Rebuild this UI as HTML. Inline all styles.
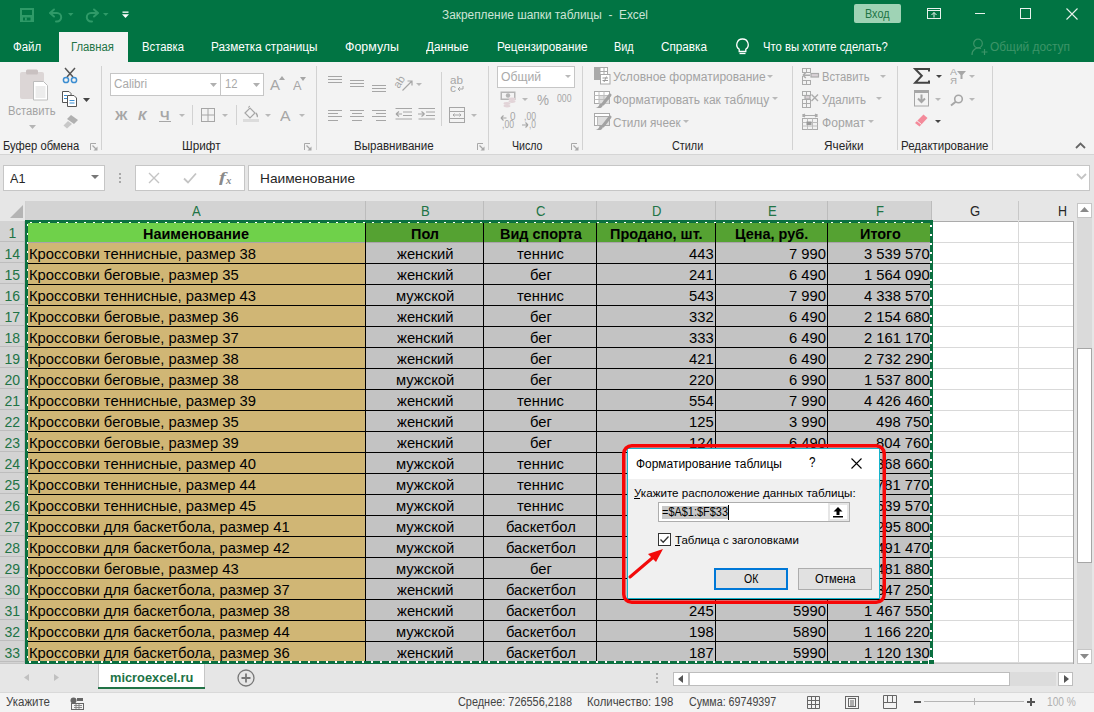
<!DOCTYPE html>
<html><head><meta charset="utf-8"><style>
*{margin:0;padding:0;box-sizing:border-box}
html,body{width:1094px;height:712px;overflow:hidden;background:#e6e6e6;font-family:"Liberation Sans",sans-serif}
body{position:relative}
.t{position:absolute;white-space:nowrap;transform-origin:0 0}
.r{position:absolute}
.s{position:absolute;overflow:visible}
</style></head><body>
<div class="r" style="left:0px;top:0px;width:1094px;height:62px;background:#017443;"></div><svg class="s" style="left:20px;top:8px;" width="14" height="14" viewBox="0 0 14 14"><path d="M0 0H14V14H0Z M2 2V7H12V2Z M3 9.5V12.5H10.5V9.5Z" fill="#2f9a68" fill-rule="evenodd"/><rect x="5" y="9.5" width="1.8" height="3" fill="#2f9a68"/></svg><svg class="s" style="left:48px;top:8px;" width="16" height="14" viewBox="0 0 16 14"><path d="M6 1.5L2 5L6 8.5" fill="none" stroke="#2f9a68" stroke-width="2" stroke-linecap="round" stroke-linejoin="round"/><path d="M2.5 5H9A4.2 4.2 0 0 1 9 13.4H8" fill="none" stroke="#2f9a68" stroke-width="2" stroke-linecap="round"/></svg><svg class="s" style="left:67.75px;top:12.9px;" width="5.5" height="3" viewBox="0 0 5.5 3"><path d="M0 0H5.5L2.75 3Z" fill="#2f9a68"/></svg><svg class="s" style="left:84px;top:8px;" width="16" height="14" viewBox="0 0 16 14"><path d="M10 1.5L14 5L10 8.5" fill="none" stroke="#2f9a68" stroke-width="2" stroke-linecap="round" stroke-linejoin="round"/><path d="M13.5 5H7A4.2 4.2 0 0 0 7 13.4H8" fill="none" stroke="#2f9a68" stroke-width="2" stroke-linecap="round"/></svg><svg class="s" style="left:102.75px;top:12.9px;" width="5.5" height="3" viewBox="0 0 5.5 3"><path d="M0 0H5.5L2.75 3Z" fill="#2f9a68"/></svg><svg class="s" style="left:122px;top:11px;" width="7" height="8" viewBox="0 0 7 8"><rect x="0.5" y="0.5" width="6" height="1.3" fill="#fff"/><path d="M0 3.3H7L3.5 7Z" fill="#fff"/></svg><div class="t" style="left:441.70px;top:8.14px;font-size:12px;line-height:14px;color:#cde5d6;transform:scaleX(0.9886);">Закрепление шапки таблицы&nbsp;&nbsp;-&nbsp;&nbsp;Excel</div><div class="r" style="left:854px;top:4px;width:47px;height:19px;background:#9fd3b5;border-radius:2px"></div><div class="t" style="left:865.25px;top:7.14px;font-size:12px;line-height:14px;color:#217346;transform:scaleX(0.9025);">Вход</div><svg class="s" style="left:927px;top:8px;" width="14" height="11" viewBox="0 0 14 11"><rect x="0.5" y="0.5" width="13" height="10" fill="none" stroke="#e8f1ec"/><path d="M1 2.5H13" stroke="#e8f1ec"/><path d="M7 9.5V4.5M4.5 7L7 4.5L9.5 7" fill="none" stroke="#e8f1ec"/></svg><div class="r" style="left:975px;top:13px;width:10px;height:1px;background:#e8f1ec;"></div><svg class="s" style="left:1020px;top:8px;" width="11" height="11" viewBox="0 0 11 11"><rect x="0.5" y="0.5" width="10" height="10" fill="none" stroke="#e8f1ec"/></svg><svg class="s" style="left:1066px;top:8px;" width="12" height="12" viewBox="0 0 12 12"><path d="M0.5 0.5L11.5 11.5M11.5 0.5L0.5 11.5" stroke="#e8f1ec" stroke-width="1.1"/></svg><div class="r" style="left:59px;top:32px;width:69px;height:30px;background:#f3f3f3;"></div><div class="t" style="left:13.40px;top:39.64px;font-size:12px;line-height:14px;color:#ffffff;transform:scaleX(0.9559);">Файл</div><div class="t" style="left:71.40px;top:39.64px;font-size:12px;line-height:14px;color:#217346;transform:scaleX(0.9393);">Главная</div><div class="t" style="left:142.00px;top:39.64px;font-size:12px;line-height:14px;color:#ffffff;transform:scaleX(0.9417);">Вставка</div><div class="t" style="left:211.00px;top:39.64px;font-size:12px;line-height:14px;color:#ffffff;transform:scaleX(0.9783);">Разметка страницы</div><div class="t" style="left:345.00px;top:39.64px;font-size:12px;line-height:14px;color:#ffffff;transform:scaleX(1.0341);">Формулы</div><div class="t" style="left:426.00px;top:39.64px;font-size:12px;line-height:14px;color:#ffffff;transform:scaleX(0.9826);">Данные</div><div class="t" style="left:496.50px;top:39.64px;font-size:12px;line-height:14px;color:#ffffff;transform:scaleX(0.9767);">Рецензирование</div><div class="t" style="left:614.00px;top:39.64px;font-size:12px;line-height:14px;color:#ffffff;transform:scaleX(0.9075);">Вид</div><div class="t" style="left:661.00px;top:39.64px;font-size:12px;line-height:14px;color:#ffffff;transform:scaleX(0.9772);">Справка</div><svg class="s" style="left:735px;top:38px;" width="15" height="18" viewBox="0 0 15 18"><path d="M7.5 1A5.6 5.6 0 0 0 4.2 11.2V13.5H10.8V11.2A5.6 5.6 0 0 0 7.5 1Z" fill="none" stroke="#fff" stroke-width="1.3"/><path d="M4.5 15.5H10.5" stroke="#fff" stroke-width="1.3"/></svg><div class="t" style="left:762.70px;top:39.64px;font-size:12px;line-height:14px;color:#ffffff;transform:scaleX(0.9408);">Что вы хотите сделать?</div><svg class="s" style="left:971px;top:38px;" width="17" height="18" viewBox="0 0 17 18"><circle cx="7" cy="5.5" r="4.3" fill="none" stroke="#3d9468" stroke-width="1.2"/><path d="M1 17A6.5 6.5 0 0 1 10 10.5" fill="none" stroke="#3d9468" stroke-width="1.2"/><path d="M10.5 14H16.5M13.5 11V17" stroke="#3d9468" stroke-width="1.2"/></svg><div class="t" style="left:990.00px;top:39.64px;font-size:12px;line-height:14px;color:#3d9468;transform:scaleX(0.9922);">Общий доступ</div>
<div class="r" style="left:0px;top:62px;width:1094px;height:92px;background:#f3f3f3;"></div><div class="r" style="left:0px;top:154px;width:1094px;height:1px;background:#d5d5d5;"></div><div class="r" style="left:101px;top:66px;width:1px;height:84px;background:#d2d2d2;"></div><div class="r" style="left:316px;top:66px;width:1px;height:84px;background:#d2d2d2;"></div><div class="r" style="left:488px;top:66px;width:1px;height:84px;background:#d2d2d2;"></div><div class="r" style="left:582px;top:66px;width:1px;height:84px;background:#d2d2d2;"></div><div class="r" style="left:792px;top:66px;width:1px;height:84px;background:#d2d2d2;"></div><div class="r" style="left:897px;top:66px;width:1px;height:84px;background:#d2d2d2;"></div><div class="r" style="left:992px;top:66px;width:1px;height:84px;background:#d2d2d2;"></div><div class="t" style="left:3.30px;top:138.84px;font-size:12px;line-height:14px;color:#262626;transform:scaleX(0.9345);">Буфер обмена</div><div class="t" style="left:181.50px;top:138.84px;font-size:12px;line-height:14px;color:#262626;transform:scaleX(0.9752);">Шрифт</div><div class="t" style="left:354.00px;top:138.84px;font-size:12px;line-height:14px;color:#262626;transform:scaleX(0.9637);">Выравнивание</div><div class="t" style="left:511.50px;top:138.84px;font-size:12px;line-height:14px;color:#262626;transform:scaleX(0.8838);">Число</div><div class="t" style="left:671.50px;top:138.84px;font-size:12px;line-height:14px;color:#262626;transform:scaleX(0.9025);">Стили</div><div class="t" style="left:824.00px;top:138.84px;font-size:12px;line-height:14px;color:#262626;transform:scaleX(0.9814);">Ячейки</div><div class="t" style="left:901.00px;top:138.84px;font-size:12px;line-height:14px;color:#262626;transform:scaleX(0.9572);">Редактирование</div><svg class="s" style="left:90px;top:143px;" width="8" height="8" viewBox="0 0 8 8"><path d="M0.5 7V0.5H6" fill="none" stroke="#a8a8a8"/><path d="M2.5 2.5L6 6" stroke="#a8a8a8" stroke-width="1.2"/><path d="M7.5 3.5V7.5H3.5Z" fill="#a8a8a8"/></svg><svg class="s" style="left:304px;top:143px;" width="8" height="8" viewBox="0 0 8 8"><path d="M0.5 7V0.5H6" fill="none" stroke="#a8a8a8"/><path d="M2.5 2.5L6 6" stroke="#a8a8a8" stroke-width="1.2"/><path d="M7.5 3.5V7.5H3.5Z" fill="#a8a8a8"/></svg><svg class="s" style="left:477px;top:143px;" width="8" height="8" viewBox="0 0 8 8"><path d="M0.5 7V0.5H6" fill="none" stroke="#a8a8a8"/><path d="M2.5 2.5L6 6" stroke="#a8a8a8" stroke-width="1.2"/><path d="M7.5 3.5V7.5H3.5Z" fill="#a8a8a8"/></svg><svg class="s" style="left:571px;top:143px;" width="8" height="8" viewBox="0 0 8 8"><path d="M0.5 7V0.5H6" fill="none" stroke="#a8a8a8"/><path d="M2.5 2.5L6 6" stroke="#a8a8a8" stroke-width="1.2"/><path d="M7.5 3.5V7.5H3.5Z" fill="#a8a8a8"/></svg><svg class="s" style="left:19px;top:69px;" width="30" height="32" viewBox="0 0 30 32"><rect x="1" y="3" width="24" height="27" rx="2" fill="#dcd6d6"/><rect x="7" y="0.5" width="12" height="5" rx="1.5" fill="#c9c1c1"/><path d="M14.5 12.5H24.5L28.5 16.5V31H14.5Z" fill="#fff" stroke="#bdbdbd"/><path d="M16.5 17H26.5V29H16.5Z" fill="#ececec"/></svg><div class="t" style="left:8.20px;top:103.64px;font-size:12px;line-height:14px;color:#a3a3a3;transform:scaleX(0.9358);">Вставить</div><svg class="s" style="left:29.0px;top:124.5px;" width="7" height="4" viewBox="0 0 7 4"><path d="M0 0H7L3.5 4Z" fill="#b5b5b5"/></svg><svg class="s" style="left:62px;top:67px;" width="16" height="17" viewBox="0 0 16 17"><path d="M3 1L11 10M13 1L5 10" stroke="#555" stroke-width="1.5"/><circle cx="4" cy="13" r="2.6" fill="none" stroke="#3b8dd1" stroke-width="1.5"/><circle cx="12" cy="13" r="2.6" fill="none" stroke="#3b8dd1" stroke-width="1.5"/></svg><svg class="s" style="left:62px;top:91px;" width="16" height="16" viewBox="0 0 16 16"><path d="M0.5 0.5H7L9 2.5V11.5H0.5Z" fill="#fff" stroke="#555"/><path d="M5.5 4.5H12L14.5 7V15.5H5.5Z" fill="#fff" stroke="#555"/><rect x="2" y="4" width="3" height="1" fill="#3b8dd1"/><rect x="2" y="7" width="3" height="1" fill="#3b8dd1"/><rect x="7.5" y="9" width="5" height="1" fill="#3b8dd1"/><rect x="7.5" y="11.5" width="5" height="1" fill="#3b8dd1"/></svg><svg class="s" style="left:83.0px;top:97.5px;" width="7" height="4" viewBox="0 0 7 4"><path d="M0 0H7L3.5 4Z" fill="#444"/></svg><svg class="s" style="left:62px;top:114px;" width="17" height="15" viewBox="0 0 17 15"><path d="M9 1L16 6L12 10L5 5Z" fill="#b0b0b0"/><path d="M6 7L10 10L5 14.5L1.5 11.5Z" fill="#c8c8c8"/></svg><div class="r" style="left:110px;top:73px;width:154px;height:23px;background:#fff;border:1px solid #c6c6c6"></div><div class="r" style="left:220px;top:73px;width:1px;height:23px;background:#c6c6c6;"></div><div class="t" style="left:113.70px;top:77.47px;font-size:12.5px;line-height:14px;color:#a9a9a9;transform:scaleX(0.9315);">Calibri</div><svg class="s" style="left:210.2px;top:82.5px;" width="7" height="4" viewBox="0 0 7 4"><path d="M0 0H7L3.5 4Z" fill="#b0b0b0"/></svg><div class="t" style="left:224.70px;top:77.47px;font-size:12.5px;line-height:14px;color:#a9a9a9;transform:scaleX(0.8990);">12</div><svg class="s" style="left:253.0px;top:82.5px;" width="7" height="4" viewBox="0 0 7 4"><path d="M0 0H7L3.5 4Z" fill="#b0b0b0"/></svg><div class="t" style="left:270.00px;top:76.30px;font-size:15px;line-height:17px;color:#a6a6a6;">A</div><svg class="s" style="left:279px;top:76px;" width="6" height="4" viewBox="0 0 6 4"><path d="M0 4L3 0L6 4Z" fill="#a6a6a6"/></svg><div class="t" style="left:293.00px;top:78.84px;font-size:12px;line-height:14px;color:#a6a6a6;transform:scaleX(1.0620);">A</div><svg class="s" style="left:300px;top:77px;" width="6" height="4" viewBox="0 0 6 4"><path d="M0 0H6L3 4Z" fill="#a6a6a6"/></svg><div class="t" style="left:114.50px;top:108.00px;font-size:13px;line-height:15px;color:#a6a6a6;font-weight:bold;transform:scaleX(1.0639);">Ж</div><div class="t" style="left:138.00px;top:108.00px;font-size:13px;line-height:15px;color:#a6a6a6;font-weight:bold;transform:scaleX(1.0712);font-style:italic;">К</div><div class="t" style="left:160.00px;top:108.00px;font-size:13px;line-height:15px;color:#a6a6a6;font-weight:bold;transform:scaleX(1.0400);">Ч</div><div class="r" style="left:159px;top:121px;width:12px;height:1px;background:#a6a6a6;"></div><svg class="s" style="left:178.5px;top:114.0px;" width="6" height="3" viewBox="0 0 6 3"><path d="M0 0H6L3.0 3Z" fill="#b9b9b9"/></svg><div class="r" style="left:192px;top:105px;width:1px;height:20px;background:#d2d2d2;"></div><svg class="s" style="left:201px;top:108px;" width="14" height="14" viewBox="0 0 14 14"><rect x="0.5" y="0.5" width="13" height="13" fill="none" stroke="#a6a6a6"/><path d="M7 0.5V13.5M0.5 7H13.5" stroke="#a6a6a6"/></svg><svg class="s" style="left:221.5px;top:114.0px;" width="6" height="3" viewBox="0 0 6 3"><path d="M0 0H6L3.0 3Z" fill="#b9b9b9"/></svg><div class="r" style="left:236px;top:105px;width:1px;height:20px;background:#d2d2d2;"></div><svg class="s" style="left:243px;top:106px;" width="17" height="16" viewBox="0 0 17 16"><path d="M2 7L7 2L12 7L7 12Z" fill="none" stroke="#a6a6a6" stroke-width="1.2"/><path d="M5 1.5L7 0" stroke="#a6a6a6"/><path d="M13 7Q15 10 14 11" fill="none" stroke="#a6a6a6" stroke-width="1.5"/><rect x="0" y="13" width="16" height="3" fill="#dcdcdc"/></svg><svg class="s" style="left:264.5px;top:114.0px;" width="6" height="3" viewBox="0 0 6 3"><path d="M0 0H6L3.0 3Z" fill="#b9b9b9"/></svg><div class="t" style="left:280.00px;top:107.30px;font-size:15px;line-height:17px;color:#a6a6a6;transform:scaleX(1.0495);">A</div><svg class="s" style="left:298.5px;top:114.0px;" width="6" height="3" viewBox="0 0 6 3"><path d="M0 0H6L3.0 3Z" fill="#b9b9b9"/></svg><svg class="s" style="left:328px;top:76px;" width="16" height="10" viewBox="0 0 16 10"><rect x="0" y="0" width="14" height="1" fill="#a6a6a6"/><rect x="0" y="3" width="14" height="1" fill="#a6a6a6"/><rect x="0" y="6" width="14" height="1" fill="#a6a6a6"/></svg><svg class="s" style="left:350px;top:80px;" width="16" height="10" viewBox="0 0 16 10"><rect x="0" y="0" width="14" height="1" fill="#a6a6a6"/><rect x="0" y="3" width="14" height="1" fill="#a6a6a6"/><rect x="0" y="6" width="14" height="1" fill="#a6a6a6"/></svg><svg class="s" style="left:372px;top:85px;" width="16" height="10" viewBox="0 0 16 10"><rect x="0" y="0" width="14" height="1" fill="#a6a6a6"/><rect x="0" y="3" width="14" height="1" fill="#a6a6a6"/><rect x="0" y="6" width="14" height="1" fill="#a6a6a6"/></svg><svg class="s" style="left:394px;top:75px;" width="20" height="18" viewBox="0 0 20 18"><text x="0" y="0" font-size="11" font-family="Liberation Sans" fill="#a6a6a6" transform="translate(5 14) rotate(-58)">ab</text><path d="M8.5 15.5L17.5 6.5M13.5 6H18V10.5" fill="none" stroke="#a6a6a6" stroke-width="1.2"/></svg><svg class="s" style="left:415.5px;top:83.0px;" width="6" height="3" viewBox="0 0 6 3"><path d="M0 0H6L3.0 3Z" fill="#b9b9b9"/></svg><svg class="s" style="left:328px;top:110px;" width="16" height="11" viewBox="0 0 16 11"><rect x="0" y="0" width="14" height="1" fill="#a6a6a6"/><rect x="0" y="3" width="10" height="1" fill="#a6a6a6"/><rect x="0" y="6" width="14" height="1" fill="#a6a6a6"/><rect x="0" y="10" width="10" height="1" fill="#a6a6a6"/></svg><svg class="s" style="left:350px;top:110px;" width="16" height="11" viewBox="0 0 16 11"><rect x="0" y="0" width="14" height="1" fill="#a6a6a6"/><rect x="2" y="3" width="10" height="1" fill="#a6a6a6"/><rect x="0" y="6" width="14" height="1" fill="#a6a6a6"/><rect x="2" y="10" width="10" height="1" fill="#a6a6a6"/></svg><svg class="s" style="left:372px;top:110px;" width="16" height="11" viewBox="0 0 16 11"><rect x="0" y="0" width="14" height="1" fill="#a6a6a6"/><rect x="4" y="3" width="10" height="1" fill="#a6a6a6"/><rect x="0" y="6" width="14" height="1" fill="#a6a6a6"/><rect x="4" y="10" width="10" height="1" fill="#a6a6a6"/></svg><svg class="s" style="left:395px;top:108px;" width="18" height="13" viewBox="0 0 18 13"><path d="M0.5 0.5H17M8 4H17M8 7.5H17M0.5 11H17" stroke="#a6a6a6"/><path d="M1 6H7M1 6L4 3.5M1 6L4 8.5" fill="none" stroke="#a6a6a6" stroke-width="1.2"/></svg><svg class="s" style="left:418px;top:108px;" width="18" height="13" viewBox="0 0 18 13"><path d="M0.5 0.5H17M8 4H17M8 7.5H17M0.5 11H17" stroke="#a6a6a6"/><path d="M0 6H6.5M6.5 6L3.5 3.5M6.5 6L3.5 8.5" fill="none" stroke="#a6a6a6" stroke-width="1.2"/></svg><div class="r" style="left:441px;top:72px;width:1px;height:54px;background:#d2d2d2;"></div><div class="t" style="left:450.00px;top:73.69px;font-size:11px;line-height:13px;color:#a6a6a6;transform:scaleX(1.0625);">ab</div><div class="t" style="left:450.00px;top:81.69px;font-size:11px;line-height:13px;color:#a6a6a6;transform:scaleX(1.0909);">c</div><svg class="s" style="left:457px;top:86px;" width="7" height="6" viewBox="0 0 7 6"><path d="M6 0V3H1M1 3L3 1M1 3L3 5" fill="none" stroke="#a6a6a6"/></svg><svg class="s" style="left:449px;top:107px;" width="16" height="16" viewBox="0 0 16 16"><rect x="0.5" y="0.5" width="15" height="15" fill="none" stroke="#a6a6a6"/><path d="M0.5 4.5H15.5M0.5 11.5H15.5M4 8H12M4 8L5.5 6.5M4 8L5.5 9.5M12 8L10.5 6.5M12 8L10.5 9.5" fill="none" stroke="#a6a6a6"/></svg><svg class="s" style="left:470.5px;top:114.0px;" width="6" height="3" viewBox="0 0 6 3"><path d="M0 0H6L3.0 3Z" fill="#b9b9b9"/></svg><div class="r" style="left:497px;top:66px;width:78px;height:22px;background:#fff;border:1px solid #c6c6c6"></div><div class="t" style="left:500.70px;top:70.04px;font-size:12px;line-height:14px;color:#a9a9a9;transform:scaleX(1.0130);">Общий</div><svg class="s" style="left:564.5px;top:75.0px;" width="6" height="3" viewBox="0 0 6 3"><path d="M0 0H6L3.0 3Z" fill="#b9b9b9"/></svg><svg class="s" style="left:500px;top:91px;" width="17" height="17" viewBox="0 0 17 17"><rect x="0.5" y="0.5" width="15" height="8.5" fill="#b5b5b5"/><rect x="2" y="2" width="12" height="5.5" fill="#f3f3f3"/><circle cx="8" cy="4.5" r="2.2" fill="#b5b5b5"/><ellipse cx="12" cy="8" rx="3.5" ry="1.4" fill="#e2d4d8"/><ellipse cx="12" cy="10.5" rx="3.5" ry="1.4" fill="#e2d4d8"/><ellipse cx="7" cy="12.5" rx="3.5" ry="1.4" fill="#e2d4d8"/><ellipse cx="7" cy="15" rx="3.5" ry="1.4" fill="#e2d4d8"/></svg><svg class="s" style="left:521.5px;top:98.0px;" width="6" height="3" viewBox="0 0 6 3"><path d="M0 0H6L3.0 3Z" fill="#b9b9b9"/></svg><div class="t" style="left:537.00px;top:91.75px;font-size:14px;line-height:16px;color:#a6a6a6;transform:scaleX(0.9640);">%</div><div class="t" style="left:557.00px;top:92.53px;font-size:10px;line-height:12px;color:#a6a6a6;transform:scaleX(0.8691);">000</div><div class="t" style="left:510.00px;top:110.53px;font-size:10px;line-height:12px;color:#a6a6a6;transform:scaleX(0.9889);">0</div><div class="t" style="left:502.00px;top:118.53px;font-size:10px;line-height:12px;color:#a6a6a6;transform:scaleX(0.8632);">,00</div><svg class="s" style="left:500px;top:115px;" width="7" height="6" viewBox="0 0 7 6"><path d="M6.5 3H1M1 3L3.5 0.5M1 3L3.5 5.5" fill="none" stroke="#a6a6a6" stroke-width="1.2"/></svg><div class="t" style="left:524.00px;top:110.53px;font-size:10px;line-height:12px;color:#a6a6a6;transform:scaleX(0.8632);">,00</div><div class="t" style="left:529.00px;top:118.53px;font-size:10px;line-height:12px;color:#a6a6a6;transform:scaleX(0.8393);">,0</div><svg class="s" style="left:522px;top:122px;" width="7" height="6" viewBox="0 0 7 6"><path d="M0 3H6M6 3L3.5 0.5M6 3L3.5 5.5" fill="none" stroke="#a6a6a6" stroke-width="1.2"/></svg><svg class="s" style="left:594px;top:67px;" width="17" height="18" viewBox="0 0 17 18"><rect x="0.5" y="0.5" width="13" height="12" fill="#fff" stroke="#a9a9a9"/><rect x="0" y="0" width="6.5" height="13" fill="#a9a9a9"/><path d="M0 4.5H14M0 8.5H14M10 0V13" stroke="#a9a9a9"/><rect x="6.5" y="7.5" width="9.5" height="9.5" fill="#fff" stroke="#a9a9a9"/><path d="M8.5 11H14M8.5 13.5H14M12.5 9.5L10 15" stroke="#999"/></svg><svg class="s" style="left:594px;top:91px;" width="17" height="18" viewBox="0 0 17 18"><rect x="0.5" y="0.5" width="15" height="12" fill="#fff" stroke="#a9a9a9"/><rect x="5" y="4.5" width="10" height="8" fill="#dedede"/><path d="M0.5 4.5H15.5M0.5 8.5H15.5M5 0.5V12.5M10 0.5V12.5" stroke="#bdbdbd"/><path d="M16 4L9 13" stroke="#a2a2a2" stroke-width="3" stroke-linecap="round"/><path d="M8.5 12.5Q9.5 15.5 6.5 17H1.5Q5 16 5.5 13Z" fill="#a2a2a2"/></svg><svg class="s" style="left:594px;top:113px;" width="17" height="18" viewBox="0 0 17 18"><rect x="0.5" y="0.5" width="15" height="12" fill="#fff" stroke="#a9a9a9"/><path d="M0.5 3.5H15.5" stroke="#a9a9a9"/><rect x="4" y="4" width="11" height="8" fill="#dedede"/><path d="M3.5 3.5V12.5" stroke="#bdbdbd"/><path d="M16 4L9 13" stroke="#a2a2a2" stroke-width="3" stroke-linecap="round"/><path d="M8.5 12.5Q9.5 15.5 6.5 17H1.5Q5 16 5.5 13Z" fill="#a2a2a2"/></svg><div class="t" style="left:613.00px;top:69.84px;font-size:12px;line-height:14px;color:#a3a3a3;">Условное форматирование</div><svg class="s" style="left:767.0px;top:74.5px;" width="6" height="3" viewBox="0 0 6 3"><path d="M0 0H6L3.0 3Z" fill="#b9b9b9"/></svg><div class="t" style="left:613.00px;top:92.64px;font-size:12px;line-height:14px;color:#a3a3a3;">Форматировать как таблицу</div><svg class="s" style="left:772.0px;top:97.3px;" width="6" height="3" viewBox="0 0 6 3"><path d="M0 0H6L3.0 3Z" fill="#b9b9b9"/></svg><div class="t" style="left:613.00px;top:115.54px;font-size:12px;line-height:14px;color:#a3a3a3;transform:scaleX(0.9761);">Стили ячеек</div><svg class="s" style="left:683.0px;top:120.2px;" width="6" height="3" viewBox="0 0 6 3"><path d="M0 0H6L3.0 3Z" fill="#b9b9b9"/></svg><svg class="s" style="left:802px;top:68px;" width="17" height="17" viewBox="0 0 17 17"><rect x="0.5" y="0.5" width="4" height="4" fill="none" stroke="#ababab"/><rect x="4.5" y="0.5" width="4" height="4" fill="none" stroke="#ababab"/><rect x="0.5" y="12.5" width="4" height="4" fill="none" stroke="#ababab"/><rect x="4.5" y="12.5" width="4" height="4" fill="none" stroke="#ababab"/><rect x="9" y="5.5" width="7.5" height="3.5" fill="#d9d2d6" stroke="#ababab" stroke-width="1.2"/><path d="M1 7.2H8M1 7.2L3.8 4.5M1 7.2L3.8 10" fill="none" stroke="#ababab" stroke-width="1.5"/><path d="M0.5 8V12" stroke="#ababab"/></svg><svg class="s" style="left:802px;top:91px;" width="17" height="17" viewBox="0 0 17 17"><rect x="0.5" y="0.5" width="4" height="4" fill="none" stroke="#ababab"/><rect x="4.5" y="0.5" width="4" height="4" fill="none" stroke="#ababab"/><rect x="0.5" y="8.5" width="4" height="4" fill="none" stroke="#ababab"/><rect x="4.5" y="8.5" width="4" height="4" fill="none" stroke="#ababab"/><rect x="0.5" y="12.5" width="4" height="4" fill="none" stroke="#ababab"/><rect x="4.5" y="12.5" width="4" height="4" fill="none" stroke="#ababab"/><rect x="3" y="4.5" width="5" height="3.5" fill="#d9d2d6" stroke="#ababab" stroke-width="1.2"/><path d="M9.5 3.5L16 10M16 3.5L9.5 10" stroke="#ababab" stroke-width="1.4"/></svg><svg class="s" style="left:802px;top:113px;" width="17" height="17" viewBox="0 0 17 17"><path d="M1 2.5H15M1 1V4M15 1V4M1 2.5L3 1M1 2.5L3 4M15 2.5L13 1M15 2.5L13 4" fill="none" stroke="#ababab" stroke-width="1.2"/><rect x="0.5" y="5.5" width="15" height="11" fill="none" stroke="#ababab"/><path d="M0.5 9.5H15.5M0.5 13H15.5M5.5 5.5V16.5M10.5 5.5V16.5" stroke="#bcbcbc"/><rect x="4.5" y="8.5" width="5" height="3.5" fill="#999"/></svg><div class="t" style="left:822.00px;top:69.84px;font-size:12px;line-height:14px;color:#a3a3a3;transform:scaleX(0.9338);">Вставить</div><svg class="s" style="left:879.5px;top:74.5px;" width="6" height="3" viewBox="0 0 6 3"><path d="M0 0H6L3.0 3Z" fill="#b9b9b9"/></svg><div class="t" style="left:822.00px;top:92.64px;font-size:12px;line-height:14px;color:#a3a3a3;transform:scaleX(0.9604);">Удалить</div><svg class="s" style="left:875.5px;top:97.3px;" width="6" height="3" viewBox="0 0 6 3"><path d="M0 0H6L3.0 3Z" fill="#b9b9b9"/></svg><div class="t" style="left:822.00px;top:115.54px;font-size:12px;line-height:14px;color:#a3a3a3;transform:scaleX(1.0087);">Формат</div><svg class="s" style="left:868.0px;top:120.2px;" width="6" height="3" viewBox="0 0 6 3"><path d="M0 0H6L3.0 3Z" fill="#b9b9b9"/></svg><svg class="s" style="left:914px;top:68px;" width="16" height="16" viewBox="0 0 16 16"><path d="M15 3.5V1H1.2L7.8 7.8L1.2 14.8H15V12.5" fill="none" stroke="#444" stroke-width="2" stroke-linejoin="miter"/></svg><svg class="s" style="left:935.5px;top:75.0px;" width="6" height="3" viewBox="0 0 6 3"><path d="M0 0H6L3.0 3Z" fill="#444"/></svg><div class="t" style="left:950.00px;top:66.88px;font-size:9px;line-height:10px;color:#a6a6a6;transform:scaleX(1.1661);">А</div><div class="t" style="left:950.00px;top:75.88px;font-size:9px;line-height:10px;color:#a6a6a6;transform:scaleX(1.0770);">Я</div><svg class="s" style="left:957px;top:71px;" width="9" height="8" viewBox="0 0 9 8"><path d="M0 0H9L5.5 4V8H3.5V4Z" fill="#a6a6a6"/></svg><svg class="s" style="left:968.5px;top:75.0px;" width="6" height="3" viewBox="0 0 6 3"><path d="M0 0H6L3.0 3Z" fill="#b9b9b9"/></svg><svg class="s" style="left:914px;top:90px;" width="16" height="17" viewBox="0 0 16 17"><rect x="0.5" y="0.5" width="14" height="15.5" fill="none" stroke="#a6a6a6"/><rect x="0.5" y="0.5" width="14" height="2.5" fill="#a6a6a6"/><path d="M7.5 4.5V12M4 8.5L7.5 12L11 8.5" fill="none" stroke="#a6a6a6" stroke-width="2"/></svg><svg class="s" style="left:934.5px;top:98.0px;" width="6" height="3" viewBox="0 0 6 3"><path d="M0 0H6L3.0 3Z" fill="#b9b9b9"/></svg><svg class="s" style="left:950px;top:94px;" width="14" height="12" viewBox="0 0 14 12"><circle cx="8.5" cy="5" r="3.8" fill="none" stroke="#a6a6a6" stroke-width="1.6"/><path d="M6 7.5L1 11.5" stroke="#a6a6a6" stroke-width="2"/></svg><svg class="s" style="left:968.5px;top:98.0px;" width="6" height="3" viewBox="0 0 6 3"><path d="M0 0H6L3.0 3Z" fill="#b9b9b9"/></svg><svg class="s" style="left:914px;top:114px;" width="15" height="14" viewBox="0 0 15 14"><path d="M9.5 0.5L13.5 4L5.5 12.5L1 9Z" fill="#f48a9a"/><path d="M3 6.8L7.5 10.5" stroke="#f3f3f3" stroke-width="1"/></svg><svg class="s" style="left:934.5px;top:120.0px;" width="6" height="3" viewBox="0 0 6 3"><path d="M0 0H6L3.0 3Z" fill="#444"/></svg><svg class="s" style="left:1075px;top:142px;" width="11" height="7" viewBox="0 0 11 7"><path d="M1 6L5.5 1.5L10 6" fill="none" stroke="#666" stroke-width="1.8"/></svg>
<div class="r" style="left:3px;top:165px;width:102px;height:26px;background:#fff;border:1px solid #c6c6c6"></div><div class="t" style="left:10.20px;top:171.30px;font-size:13px;line-height:15px;color:#262626;transform:scaleX(0.9685);">A1</div><svg class="s" style="left:91.0px;top:174.5px;" width="8" height="4" viewBox="0 0 8 4"><path d="M0 0H8L4.0 4Z" fill="#777"/></svg><svg class="s" style="left:119px;top:173px;" width="2" height="12" viewBox="0 0 2 12"><rect x="0" y="0" width="2" height="2" fill="#a8a8a8"/><rect x="0" y="4" width="2" height="2" fill="#a8a8a8"/><rect x="0" y="8" width="2" height="2" fill="#a8a8a8"/></svg><div class="r" style="left:135px;top:165px;width:110px;height:26px;background:#fff;border:1px solid #c6c6c6"></div><svg class="s" style="left:148px;top:172px;" width="12" height="12" viewBox="0 0 12 12"><path d="M1 1L11 11M11 1L1 11" stroke="#c4c4c4" stroke-width="1.4"/></svg><svg class="s" style="left:183px;top:172px;" width="14" height="12" viewBox="0 0 14 12"><path d="M1 6.5L5 10.5L13 1.5" fill="none" stroke="#c4c4c4" stroke-width="1.8"/></svg><div class="t" style="left:219.00px;top:169.30px;font-size:15px;line-height:17px;color:#8a8a8a;font-weight:bold;transform:scaleX(1.4013);font-family:'Liberation Serif';font-style:italic;">f</div><div class="t" style="left:225.50px;top:174.53px;font-size:10px;line-height:12px;color:#8a8a8a;font-weight:bold;transform:scaleX(1.0788);font-family:'Liberation Serif';font-style:italic;">x</div><div class="r" style="left:248px;top:165px;width:842px;height:26px;background:#fff;border:1px solid #c6c6c6"></div><div class="t" style="left:260.40px;top:170.92px;font-size:13.5px;line-height:16px;color:#262626;transform:scaleX(1.0151);">Наименование</div><svg class="s" style="left:1076px;top:173px;" width="11" height="7" viewBox="0 0 11 7"><path d="M1 1L5.5 5.5L10 1" fill="none" stroke="#c4c4c4" stroke-width="1.8"/></svg>
<div class="r" style="left:0px;top:201px;width:1073px;height:20px;background:#e6e6e6;"></div><svg class="s" style="left:10px;top:205px;" width="13" height="13" viewBox="0 0 13 13"><path d="M13 0V13H0Z" fill="#b4b4b4"/></svg><div class="r" style="left:25px;top:201px;width:1px;height:20px;background:#d0d0d0;"></div><div class="r" style="left:26px;top:201px;width:906px;height:19px;background:#d3d3d3;"></div><div class="r" style="left:365px;top:201px;width:1px;height:19px;background:#bcbcbc;"></div><div class="t" style="left:191.65px;top:203.28px;font-size:14.5px;line-height:17px;color:#217346;transform:scaleX(0.9000);">A</div><div class="r" style="left:483px;top:201px;width:1px;height:19px;background:#bcbcbc;"></div><div class="t" style="left:420.65px;top:203.28px;font-size:14.5px;line-height:17px;color:#217346;transform:scaleX(0.9000);">B</div><div class="r" style="left:596px;top:201px;width:1px;height:19px;background:#bcbcbc;"></div><div class="t" style="left:535.79px;top:203.28px;font-size:14.5px;line-height:17px;color:#217346;transform:scaleX(0.9000);">C</div><div class="r" style="left:715px;top:201px;width:1px;height:19px;background:#bcbcbc;"></div><div class="t" style="left:651.79px;top:203.28px;font-size:14.5px;line-height:17px;color:#217346;transform:scaleX(0.9000);">D</div><div class="r" style="left:827px;top:201px;width:1px;height:19px;background:#bcbcbc;"></div><div class="t" style="left:767.65px;top:203.28px;font-size:14.5px;line-height:17px;color:#217346;transform:scaleX(0.9000);">E</div><div class="r" style="left:931px;top:201px;width:1px;height:19px;background:#bcbcbc;"></div><div class="t" style="left:876.01px;top:203.28px;font-size:14.5px;line-height:17px;color:#217346;transform:scaleX(0.9000);">F</div><div class="r" style="left:1018px;top:201px;width:1px;height:19px;background:#c8c8c8;"></div><div class="t" style="left:970.42px;top:203.28px;font-size:14.5px;line-height:17px;color:#262626;transform:scaleX(0.9000);">G</div><div class="t" style="left:1057.50px;top:203.28px;font-size:14.5px;line-height:17px;color:#262626;transform:scaleX(0.8595);">H</div><div class="r" style="left:932px;top:221px;width:141px;height:1px;background:#ababab;"></div><div class="r" style="left:0px;top:221px;width:25px;height:442px;background:#d3d3d3;"></div><div class="r" style="left:0px;top:241px;width:25px;height:1px;background:#bdbdbd;"></div><div class="t" style="left:8.41px;top:225.45px;font-size:14px;line-height:16px;color:#217346;">1</div><div class="r" style="left:0px;top:262px;width:25px;height:1px;background:#bdbdbd;"></div><div class="t" style="left:4.51px;top:246.45px;font-size:14px;line-height:16px;color:#217346;">14</div><div class="r" style="left:0px;top:283px;width:25px;height:1px;background:#bdbdbd;"></div><div class="t" style="left:4.51px;top:267.45px;font-size:14px;line-height:16px;color:#217346;">15</div><div class="r" style="left:0px;top:304px;width:25px;height:1px;background:#bdbdbd;"></div><div class="t" style="left:4.51px;top:288.45px;font-size:14px;line-height:16px;color:#217346;">16</div><div class="r" style="left:0px;top:325px;width:25px;height:1px;background:#bdbdbd;"></div><div class="t" style="left:4.51px;top:309.45px;font-size:14px;line-height:16px;color:#217346;">17</div><div class="r" style="left:0px;top:346px;width:25px;height:1px;background:#bdbdbd;"></div><div class="t" style="left:4.51px;top:330.45px;font-size:14px;line-height:16px;color:#217346;">18</div><div class="r" style="left:0px;top:367px;width:25px;height:1px;background:#bdbdbd;"></div><div class="t" style="left:4.51px;top:351.45px;font-size:14px;line-height:16px;color:#217346;">19</div><div class="r" style="left:0px;top:388px;width:25px;height:1px;background:#bdbdbd;"></div><div class="t" style="left:4.51px;top:372.45px;font-size:14px;line-height:16px;color:#217346;">20</div><div class="r" style="left:0px;top:409px;width:25px;height:1px;background:#bdbdbd;"></div><div class="t" style="left:4.51px;top:393.45px;font-size:14px;line-height:16px;color:#217346;">21</div><div class="r" style="left:0px;top:430px;width:25px;height:1px;background:#bdbdbd;"></div><div class="t" style="left:4.51px;top:414.45px;font-size:14px;line-height:16px;color:#217346;">22</div><div class="r" style="left:0px;top:451px;width:25px;height:1px;background:#bdbdbd;"></div><div class="t" style="left:4.51px;top:435.45px;font-size:14px;line-height:16px;color:#217346;">23</div><div class="r" style="left:0px;top:472px;width:25px;height:1px;background:#bdbdbd;"></div><div class="t" style="left:4.51px;top:456.45px;font-size:14px;line-height:16px;color:#217346;">24</div><div class="r" style="left:0px;top:493px;width:25px;height:1px;background:#bdbdbd;"></div><div class="t" style="left:4.51px;top:477.45px;font-size:14px;line-height:16px;color:#217346;">25</div><div class="r" style="left:0px;top:514px;width:25px;height:1px;background:#bdbdbd;"></div><div class="t" style="left:4.51px;top:498.45px;font-size:14px;line-height:16px;color:#217346;">26</div><div class="r" style="left:0px;top:535px;width:25px;height:1px;background:#bdbdbd;"></div><div class="t" style="left:4.51px;top:519.45px;font-size:14px;line-height:16px;color:#217346;">27</div><div class="r" style="left:0px;top:556px;width:25px;height:1px;background:#bdbdbd;"></div><div class="t" style="left:4.51px;top:540.45px;font-size:14px;line-height:16px;color:#217346;">28</div><div class="r" style="left:0px;top:577px;width:25px;height:1px;background:#bdbdbd;"></div><div class="t" style="left:4.51px;top:561.45px;font-size:14px;line-height:16px;color:#217346;">29</div><div class="r" style="left:0px;top:598px;width:25px;height:1px;background:#bdbdbd;"></div><div class="t" style="left:4.51px;top:582.45px;font-size:14px;line-height:16px;color:#217346;">30</div><div class="r" style="left:0px;top:619px;width:25px;height:1px;background:#bdbdbd;"></div><div class="t" style="left:4.51px;top:603.45px;font-size:14px;line-height:16px;color:#217346;">31</div><div class="r" style="left:0px;top:640px;width:25px;height:1px;background:#bdbdbd;"></div><div class="t" style="left:4.51px;top:624.45px;font-size:14px;line-height:16px;color:#217346;">32</div><div class="r" style="left:0px;top:661px;width:25px;height:1px;background:#bdbdbd;"></div><div class="t" style="left:4.51px;top:645.45px;font-size:14px;line-height:16px;color:#217346;">33</div><div class="r" style="left:24px;top:221px;width:1px;height:442px;background:#bdbdbd;"></div><div class="r" style="left:26px;top:222px;width:339px;height:20px;background:#6fd14a;"></div><div class="t" style="left:143.01px;top:224.60px;font-size:15px;line-height:17px;color:#000;font-weight:bold;transform:scaleX(0.9630);">Наименование</div><div class="r" style="left:366px;top:222px;width:117px;height:20px;background:#55a232;"></div><div class="t" style="left:410.99px;top:224.60px;font-size:15px;line-height:17px;color:#000;font-weight:bold;transform:scaleX(0.9630);">Пол</div><div class="r" style="left:484px;top:222px;width:112px;height:20px;background:#55a232;"></div><div class="t" style="left:499.59px;top:224.60px;font-size:15px;line-height:17px;color:#000;font-weight:bold;transform:scaleX(0.9630);">Вид спорта</div><div class="r" style="left:597px;top:222px;width:118px;height:20px;background:#55a232;"></div><div class="t" style="left:610.26px;top:224.60px;font-size:15px;line-height:17px;color:#000;font-weight:bold;transform:scaleX(0.9630);">Продано, шт.</div><div class="r" style="left:716px;top:222px;width:111px;height:20px;background:#55a232;"></div><div class="t" style="left:735.43px;top:224.60px;font-size:15px;line-height:17px;color:#000;font-weight:bold;transform:scaleX(0.9630);">Цена, руб.</div><div class="r" style="left:828px;top:222px;width:103px;height:20px;background:#55a232;"></div><div class="t" style="left:859.63px;top:224.60px;font-size:15px;line-height:17px;color:#000;font-weight:bold;transform:scaleX(0.9630);">Итого</div><div class="r" style="left:26px;top:242px;width:906px;height:1px;background:#aaa3ab;"></div><div class="r" style="left:933px;top:222px;width:85px;height:20px;background:#fff;"></div><div class="r" style="left:1019px;top:222px;width:54px;height:20px;background:#fff;"></div><div class="r" style="left:932px;top:242px;width:141px;height:1px;background:#d9d9d9;"></div><div class="r" style="left:26px;top:243px;width:339px;height:20px;background:#d0b675;"></div><div class="t" style="left:28.80px;top:245.78px;font-size:14.5px;line-height:17px;color:#000;transform:scaleX(1.0188);">Кроссовки теннисные, размер 38</div><div class="r" style="left:366px;top:243px;width:117px;height:20px;background:#c3c3c3;"></div><div class="t" style="left:396.69px;top:245.78px;font-size:14.5px;line-height:17px;color:#000;transform:scaleX(1.0188);">женский</div><div class="r" style="left:484px;top:243px;width:112px;height:20px;background:#c3c3c3;"></div><div class="t" style="left:517.11px;top:245.78px;font-size:14.5px;line-height:17px;color:#000;transform:scaleX(1.0188);">теннис</div><div class="r" style="left:597px;top:243px;width:118px;height:20px;background:#c3c3c3;"></div><div class="t" style="left:688.85px;top:245.78px;font-size:14.5px;line-height:17px;color:#000;transform:scaleX(1.0188);">443</div><div class="r" style="left:716px;top:243px;width:111px;height:20px;background:#c3c3c3;"></div><div class="t" style="left:788.53px;top:245.78px;font-size:14.5px;line-height:17px;color:#000;transform:scaleX(1.0188);">7 990</div><div class="r" style="left:828px;top:243px;width:103px;height:20px;background:#c3c3c3;"></div><div class="t" style="left:863.78px;top:245.78px;font-size:14.5px;line-height:17px;color:#000;transform:scaleX(1.0188);">3 539 570</div><div class="r" style="left:26px;top:263px;width:906px;height:1px;background:#000;"></div><div class="r" style="left:933px;top:243px;width:85px;height:20px;background:#fff;"></div><div class="r" style="left:1019px;top:243px;width:54px;height:20px;background:#fff;"></div><div class="r" style="left:932px;top:263px;width:141px;height:1px;background:#d9d9d9;"></div><div class="r" style="left:26px;top:264px;width:339px;height:20px;background:#d0b675;"></div><div class="t" style="left:28.80px;top:266.78px;font-size:14.5px;line-height:17px;color:#000;transform:scaleX(1.0188);">Кроссовки беговые, размер 35</div><div class="r" style="left:366px;top:264px;width:117px;height:20px;background:#c3c3c3;"></div><div class="t" style="left:396.69px;top:266.78px;font-size:14.5px;line-height:17px;color:#000;transform:scaleX(1.0188);">женский</div><div class="r" style="left:484px;top:264px;width:112px;height:20px;background:#c3c3c3;"></div><div class="t" style="left:529.55px;top:266.78px;font-size:14.5px;line-height:17px;color:#000;transform:scaleX(1.0188);">бег</div><div class="r" style="left:597px;top:264px;width:118px;height:20px;background:#c3c3c3;"></div><div class="t" style="left:688.85px;top:266.78px;font-size:14.5px;line-height:17px;color:#000;transform:scaleX(1.0188);">241</div><div class="r" style="left:716px;top:264px;width:111px;height:20px;background:#c3c3c3;"></div><div class="t" style="left:788.53px;top:266.78px;font-size:14.5px;line-height:17px;color:#000;transform:scaleX(1.0188);">6 490</div><div class="r" style="left:828px;top:264px;width:103px;height:20px;background:#c3c3c3;"></div><div class="t" style="left:863.78px;top:266.78px;font-size:14.5px;line-height:17px;color:#000;transform:scaleX(1.0188);">1 564 090</div><div class="r" style="left:26px;top:284px;width:906px;height:1px;background:#000;"></div><div class="r" style="left:933px;top:264px;width:85px;height:20px;background:#fff;"></div><div class="r" style="left:1019px;top:264px;width:54px;height:20px;background:#fff;"></div><div class="r" style="left:932px;top:284px;width:141px;height:1px;background:#d9d9d9;"></div><div class="r" style="left:26px;top:285px;width:339px;height:20px;background:#d0b675;"></div><div class="t" style="left:28.80px;top:287.78px;font-size:14.5px;line-height:17px;color:#000;transform:scaleX(1.0188);">Кроссовки теннисные, размер 43</div><div class="r" style="left:366px;top:285px;width:117px;height:20px;background:#c3c3c3;"></div><div class="t" style="left:395.88px;top:287.78px;font-size:14.5px;line-height:17px;color:#000;transform:scaleX(1.0188);">мужской</div><div class="r" style="left:484px;top:285px;width:112px;height:20px;background:#c3c3c3;"></div><div class="t" style="left:517.11px;top:287.78px;font-size:14.5px;line-height:17px;color:#000;transform:scaleX(1.0188);">теннис</div><div class="r" style="left:597px;top:285px;width:118px;height:20px;background:#c3c3c3;"></div><div class="t" style="left:688.85px;top:287.78px;font-size:14.5px;line-height:17px;color:#000;transform:scaleX(1.0188);">543</div><div class="r" style="left:716px;top:285px;width:111px;height:20px;background:#c3c3c3;"></div><div class="t" style="left:788.53px;top:287.78px;font-size:14.5px;line-height:17px;color:#000;transform:scaleX(1.0188);">7 990</div><div class="r" style="left:828px;top:285px;width:103px;height:20px;background:#c3c3c3;"></div><div class="t" style="left:863.78px;top:287.78px;font-size:14.5px;line-height:17px;color:#000;transform:scaleX(1.0188);">4 338 570</div><div class="r" style="left:26px;top:305px;width:906px;height:1px;background:#000;"></div><div class="r" style="left:933px;top:285px;width:85px;height:20px;background:#fff;"></div><div class="r" style="left:1019px;top:285px;width:54px;height:20px;background:#fff;"></div><div class="r" style="left:932px;top:305px;width:141px;height:1px;background:#d9d9d9;"></div><div class="r" style="left:26px;top:306px;width:339px;height:20px;background:#d0b675;"></div><div class="t" style="left:28.80px;top:308.78px;font-size:14.5px;line-height:17px;color:#000;transform:scaleX(1.0188);">Кроссовки беговые, размер 36</div><div class="r" style="left:366px;top:306px;width:117px;height:20px;background:#c3c3c3;"></div><div class="t" style="left:396.69px;top:308.78px;font-size:14.5px;line-height:17px;color:#000;transform:scaleX(1.0188);">женский</div><div class="r" style="left:484px;top:306px;width:112px;height:20px;background:#c3c3c3;"></div><div class="t" style="left:529.55px;top:308.78px;font-size:14.5px;line-height:17px;color:#000;transform:scaleX(1.0188);">бег</div><div class="r" style="left:597px;top:306px;width:118px;height:20px;background:#c3c3c3;"></div><div class="t" style="left:688.85px;top:308.78px;font-size:14.5px;line-height:17px;color:#000;transform:scaleX(1.0188);">332</div><div class="r" style="left:716px;top:306px;width:111px;height:20px;background:#c3c3c3;"></div><div class="t" style="left:788.53px;top:308.78px;font-size:14.5px;line-height:17px;color:#000;transform:scaleX(1.0188);">6 490</div><div class="r" style="left:828px;top:306px;width:103px;height:20px;background:#c3c3c3;"></div><div class="t" style="left:863.78px;top:308.78px;font-size:14.5px;line-height:17px;color:#000;transform:scaleX(1.0188);">2 154 680</div><div class="r" style="left:26px;top:326px;width:906px;height:1px;background:#000;"></div><div class="r" style="left:933px;top:306px;width:85px;height:20px;background:#fff;"></div><div class="r" style="left:1019px;top:306px;width:54px;height:20px;background:#fff;"></div><div class="r" style="left:932px;top:326px;width:141px;height:1px;background:#d9d9d9;"></div><div class="r" style="left:26px;top:327px;width:339px;height:20px;background:#d0b675;"></div><div class="t" style="left:28.80px;top:329.78px;font-size:14.5px;line-height:17px;color:#000;transform:scaleX(1.0188);">Кроссовки беговые, размер 37</div><div class="r" style="left:366px;top:327px;width:117px;height:20px;background:#c3c3c3;"></div><div class="t" style="left:396.69px;top:329.78px;font-size:14.5px;line-height:17px;color:#000;transform:scaleX(1.0188);">женский</div><div class="r" style="left:484px;top:327px;width:112px;height:20px;background:#c3c3c3;"></div><div class="t" style="left:529.55px;top:329.78px;font-size:14.5px;line-height:17px;color:#000;transform:scaleX(1.0188);">бег</div><div class="r" style="left:597px;top:327px;width:118px;height:20px;background:#c3c3c3;"></div><div class="t" style="left:688.85px;top:329.78px;font-size:14.5px;line-height:17px;color:#000;transform:scaleX(1.0188);">333</div><div class="r" style="left:716px;top:327px;width:111px;height:20px;background:#c3c3c3;"></div><div class="t" style="left:788.53px;top:329.78px;font-size:14.5px;line-height:17px;color:#000;transform:scaleX(1.0188);">6 490</div><div class="r" style="left:828px;top:327px;width:103px;height:20px;background:#c3c3c3;"></div><div class="t" style="left:863.78px;top:329.78px;font-size:14.5px;line-height:17px;color:#000;transform:scaleX(1.0188);">2 161 170</div><div class="r" style="left:26px;top:347px;width:906px;height:1px;background:#000;"></div><div class="r" style="left:933px;top:327px;width:85px;height:20px;background:#fff;"></div><div class="r" style="left:1019px;top:327px;width:54px;height:20px;background:#fff;"></div><div class="r" style="left:932px;top:347px;width:141px;height:1px;background:#d9d9d9;"></div><div class="r" style="left:26px;top:348px;width:339px;height:20px;background:#d0b675;"></div><div class="t" style="left:28.80px;top:350.78px;font-size:14.5px;line-height:17px;color:#000;transform:scaleX(1.0188);">Кроссовки беговые, размер 38</div><div class="r" style="left:366px;top:348px;width:117px;height:20px;background:#c3c3c3;"></div><div class="t" style="left:396.69px;top:350.78px;font-size:14.5px;line-height:17px;color:#000;transform:scaleX(1.0188);">женский</div><div class="r" style="left:484px;top:348px;width:112px;height:20px;background:#c3c3c3;"></div><div class="t" style="left:529.55px;top:350.78px;font-size:14.5px;line-height:17px;color:#000;transform:scaleX(1.0188);">бег</div><div class="r" style="left:597px;top:348px;width:118px;height:20px;background:#c3c3c3;"></div><div class="t" style="left:688.85px;top:350.78px;font-size:14.5px;line-height:17px;color:#000;transform:scaleX(1.0188);">421</div><div class="r" style="left:716px;top:348px;width:111px;height:20px;background:#c3c3c3;"></div><div class="t" style="left:788.53px;top:350.78px;font-size:14.5px;line-height:17px;color:#000;transform:scaleX(1.0188);">6 490</div><div class="r" style="left:828px;top:348px;width:103px;height:20px;background:#c3c3c3;"></div><div class="t" style="left:863.78px;top:350.78px;font-size:14.5px;line-height:17px;color:#000;transform:scaleX(1.0188);">2 732 290</div><div class="r" style="left:26px;top:368px;width:906px;height:1px;background:#000;"></div><div class="r" style="left:933px;top:348px;width:85px;height:20px;background:#fff;"></div><div class="r" style="left:1019px;top:348px;width:54px;height:20px;background:#fff;"></div><div class="r" style="left:932px;top:368px;width:141px;height:1px;background:#d9d9d9;"></div><div class="r" style="left:26px;top:369px;width:339px;height:20px;background:#d0b675;"></div><div class="t" style="left:28.80px;top:371.78px;font-size:14.5px;line-height:17px;color:#000;transform:scaleX(1.0188);">Кроссовки беговые, размер 38</div><div class="r" style="left:366px;top:369px;width:117px;height:20px;background:#c3c3c3;"></div><div class="t" style="left:395.88px;top:371.78px;font-size:14.5px;line-height:17px;color:#000;transform:scaleX(1.0188);">мужской</div><div class="r" style="left:484px;top:369px;width:112px;height:20px;background:#c3c3c3;"></div><div class="t" style="left:529.55px;top:371.78px;font-size:14.5px;line-height:17px;color:#000;transform:scaleX(1.0188);">бег</div><div class="r" style="left:597px;top:369px;width:118px;height:20px;background:#c3c3c3;"></div><div class="t" style="left:688.85px;top:371.78px;font-size:14.5px;line-height:17px;color:#000;transform:scaleX(1.0188);">220</div><div class="r" style="left:716px;top:369px;width:111px;height:20px;background:#c3c3c3;"></div><div class="t" style="left:788.53px;top:371.78px;font-size:14.5px;line-height:17px;color:#000;transform:scaleX(1.0188);">6 990</div><div class="r" style="left:828px;top:369px;width:103px;height:20px;background:#c3c3c3;"></div><div class="t" style="left:863.78px;top:371.78px;font-size:14.5px;line-height:17px;color:#000;transform:scaleX(1.0188);">1 537 800</div><div class="r" style="left:26px;top:389px;width:906px;height:1px;background:#000;"></div><div class="r" style="left:933px;top:369px;width:85px;height:20px;background:#fff;"></div><div class="r" style="left:1019px;top:369px;width:54px;height:20px;background:#fff;"></div><div class="r" style="left:932px;top:389px;width:141px;height:1px;background:#d9d9d9;"></div><div class="r" style="left:26px;top:390px;width:339px;height:20px;background:#d0b675;"></div><div class="t" style="left:28.80px;top:392.78px;font-size:14.5px;line-height:17px;color:#000;transform:scaleX(1.0188);">Кроссовки теннисные, размер 39</div><div class="r" style="left:366px;top:390px;width:117px;height:20px;background:#c3c3c3;"></div><div class="t" style="left:396.69px;top:392.78px;font-size:14.5px;line-height:17px;color:#000;transform:scaleX(1.0188);">женский</div><div class="r" style="left:484px;top:390px;width:112px;height:20px;background:#c3c3c3;"></div><div class="t" style="left:517.11px;top:392.78px;font-size:14.5px;line-height:17px;color:#000;transform:scaleX(1.0188);">теннис</div><div class="r" style="left:597px;top:390px;width:118px;height:20px;background:#c3c3c3;"></div><div class="t" style="left:688.85px;top:392.78px;font-size:14.5px;line-height:17px;color:#000;transform:scaleX(1.0188);">554</div><div class="r" style="left:716px;top:390px;width:111px;height:20px;background:#c3c3c3;"></div><div class="t" style="left:788.53px;top:392.78px;font-size:14.5px;line-height:17px;color:#000;transform:scaleX(1.0188);">7 990</div><div class="r" style="left:828px;top:390px;width:103px;height:20px;background:#c3c3c3;"></div><div class="t" style="left:863.78px;top:392.78px;font-size:14.5px;line-height:17px;color:#000;transform:scaleX(1.0188);">4 426 460</div><div class="r" style="left:26px;top:410px;width:906px;height:1px;background:#000;"></div><div class="r" style="left:933px;top:390px;width:85px;height:20px;background:#fff;"></div><div class="r" style="left:1019px;top:390px;width:54px;height:20px;background:#fff;"></div><div class="r" style="left:932px;top:410px;width:141px;height:1px;background:#d9d9d9;"></div><div class="r" style="left:26px;top:411px;width:339px;height:20px;background:#d0b675;"></div><div class="t" style="left:28.80px;top:413.78px;font-size:14.5px;line-height:17px;color:#000;transform:scaleX(1.0188);">Кроссовки беговые, размер 35</div><div class="r" style="left:366px;top:411px;width:117px;height:20px;background:#c3c3c3;"></div><div class="t" style="left:396.69px;top:413.78px;font-size:14.5px;line-height:17px;color:#000;transform:scaleX(1.0188);">женский</div><div class="r" style="left:484px;top:411px;width:112px;height:20px;background:#c3c3c3;"></div><div class="t" style="left:529.55px;top:413.78px;font-size:14.5px;line-height:17px;color:#000;transform:scaleX(1.0188);">бег</div><div class="r" style="left:597px;top:411px;width:118px;height:20px;background:#c3c3c3;"></div><div class="t" style="left:688.85px;top:413.78px;font-size:14.5px;line-height:17px;color:#000;transform:scaleX(1.0188);">125</div><div class="r" style="left:716px;top:411px;width:111px;height:20px;background:#c3c3c3;"></div><div class="t" style="left:788.53px;top:413.78px;font-size:14.5px;line-height:17px;color:#000;transform:scaleX(1.0188);">3 990</div><div class="r" style="left:828px;top:411px;width:103px;height:20px;background:#c3c3c3;"></div><div class="t" style="left:876.10px;top:413.78px;font-size:14.5px;line-height:17px;color:#000;transform:scaleX(1.0188);">498 750</div><div class="r" style="left:26px;top:431px;width:906px;height:1px;background:#000;"></div><div class="r" style="left:933px;top:411px;width:85px;height:20px;background:#fff;"></div><div class="r" style="left:1019px;top:411px;width:54px;height:20px;background:#fff;"></div><div class="r" style="left:932px;top:431px;width:141px;height:1px;background:#d9d9d9;"></div><div class="r" style="left:26px;top:432px;width:339px;height:20px;background:#d0b675;"></div><div class="t" style="left:28.80px;top:434.78px;font-size:14.5px;line-height:17px;color:#000;transform:scaleX(1.0188);">Кроссовки беговые, размер 39</div><div class="r" style="left:366px;top:432px;width:117px;height:20px;background:#c3c3c3;"></div><div class="t" style="left:396.69px;top:434.78px;font-size:14.5px;line-height:17px;color:#000;transform:scaleX(1.0188);">женский</div><div class="r" style="left:484px;top:432px;width:112px;height:20px;background:#c3c3c3;"></div><div class="t" style="left:529.55px;top:434.78px;font-size:14.5px;line-height:17px;color:#000;transform:scaleX(1.0188);">бег</div><div class="r" style="left:597px;top:432px;width:118px;height:20px;background:#c3c3c3;"></div><div class="t" style="left:688.85px;top:434.78px;font-size:14.5px;line-height:17px;color:#000;transform:scaleX(1.0188);">124</div><div class="r" style="left:716px;top:432px;width:111px;height:20px;background:#c3c3c3;"></div><div class="t" style="left:788.53px;top:434.78px;font-size:14.5px;line-height:17px;color:#000;transform:scaleX(1.0188);">6 490</div><div class="r" style="left:828px;top:432px;width:103px;height:20px;background:#c3c3c3;"></div><div class="t" style="left:876.10px;top:434.78px;font-size:14.5px;line-height:17px;color:#000;transform:scaleX(1.0188);">804 760</div><div class="r" style="left:26px;top:452px;width:906px;height:1px;background:#000;"></div><div class="r" style="left:933px;top:432px;width:85px;height:20px;background:#fff;"></div><div class="r" style="left:1019px;top:432px;width:54px;height:20px;background:#fff;"></div><div class="r" style="left:932px;top:452px;width:141px;height:1px;background:#d9d9d9;"></div><div class="r" style="left:26px;top:453px;width:339px;height:20px;background:#d0b675;"></div><div class="t" style="left:28.80px;top:455.78px;font-size:14.5px;line-height:17px;color:#000;transform:scaleX(1.0188);">Кроссовки теннисные, размер 40</div><div class="r" style="left:366px;top:453px;width:117px;height:20px;background:#c3c3c3;"></div><div class="t" style="left:395.88px;top:455.78px;font-size:14.5px;line-height:17px;color:#000;transform:scaleX(1.0188);">мужской</div><div class="r" style="left:484px;top:453px;width:112px;height:20px;background:#c3c3c3;"></div><div class="t" style="left:517.11px;top:455.78px;font-size:14.5px;line-height:17px;color:#000;transform:scaleX(1.0188);">теннис</div><div class="r" style="left:597px;top:453px;width:118px;height:20px;background:#c3c3c3;"></div><div class="t" style="left:688.85px;top:455.78px;font-size:14.5px;line-height:17px;color:#000;transform:scaleX(1.0188);">124</div><div class="r" style="left:716px;top:453px;width:111px;height:20px;background:#c3c3c3;"></div><div class="t" style="left:788.53px;top:455.78px;font-size:14.5px;line-height:17px;color:#000;transform:scaleX(1.0188);">6 490</div><div class="r" style="left:828px;top:453px;width:103px;height:20px;background:#c3c3c3;"></div><div class="t" style="left:876.10px;top:455.78px;font-size:14.5px;line-height:17px;color:#000;transform:scaleX(1.0188);">368 660</div><div class="r" style="left:26px;top:473px;width:906px;height:1px;background:#000;"></div><div class="r" style="left:933px;top:453px;width:85px;height:20px;background:#fff;"></div><div class="r" style="left:1019px;top:453px;width:54px;height:20px;background:#fff;"></div><div class="r" style="left:932px;top:473px;width:141px;height:1px;background:#d9d9d9;"></div><div class="r" style="left:26px;top:474px;width:339px;height:20px;background:#d0b675;"></div><div class="t" style="left:28.80px;top:476.78px;font-size:14.5px;line-height:17px;color:#000;transform:scaleX(1.0188);">Кроссовки теннисные, размер 44</div><div class="r" style="left:366px;top:474px;width:117px;height:20px;background:#c3c3c3;"></div><div class="t" style="left:395.88px;top:476.78px;font-size:14.5px;line-height:17px;color:#000;transform:scaleX(1.0188);">мужской</div><div class="r" style="left:484px;top:474px;width:112px;height:20px;background:#c3c3c3;"></div><div class="t" style="left:517.11px;top:476.78px;font-size:14.5px;line-height:17px;color:#000;transform:scaleX(1.0188);">теннис</div><div class="r" style="left:597px;top:474px;width:118px;height:20px;background:#c3c3c3;"></div><div class="t" style="left:688.85px;top:476.78px;font-size:14.5px;line-height:17px;color:#000;transform:scaleX(1.0188);">124</div><div class="r" style="left:716px;top:474px;width:111px;height:20px;background:#c3c3c3;"></div><div class="t" style="left:788.53px;top:476.78px;font-size:14.5px;line-height:17px;color:#000;transform:scaleX(1.0188);">6 490</div><div class="r" style="left:828px;top:474px;width:103px;height:20px;background:#c3c3c3;"></div><div class="t" style="left:876.10px;top:476.78px;font-size:14.5px;line-height:17px;color:#000;transform:scaleX(1.0188);">781 770</div><div class="r" style="left:26px;top:494px;width:906px;height:1px;background:#000;"></div><div class="r" style="left:933px;top:474px;width:85px;height:20px;background:#fff;"></div><div class="r" style="left:1019px;top:474px;width:54px;height:20px;background:#fff;"></div><div class="r" style="left:932px;top:494px;width:141px;height:1px;background:#d9d9d9;"></div><div class="r" style="left:26px;top:495px;width:339px;height:20px;background:#d0b675;"></div><div class="t" style="left:28.80px;top:497.78px;font-size:14.5px;line-height:17px;color:#000;transform:scaleX(1.0188);">Кроссовки теннисные, размер 45</div><div class="r" style="left:366px;top:495px;width:117px;height:20px;background:#c3c3c3;"></div><div class="t" style="left:395.88px;top:497.78px;font-size:14.5px;line-height:17px;color:#000;transform:scaleX(1.0188);">мужской</div><div class="r" style="left:484px;top:495px;width:112px;height:20px;background:#c3c3c3;"></div><div class="t" style="left:517.11px;top:497.78px;font-size:14.5px;line-height:17px;color:#000;transform:scaleX(1.0188);">теннис</div><div class="r" style="left:597px;top:495px;width:118px;height:20px;background:#c3c3c3;"></div><div class="t" style="left:688.85px;top:497.78px;font-size:14.5px;line-height:17px;color:#000;transform:scaleX(1.0188);">124</div><div class="r" style="left:716px;top:495px;width:111px;height:20px;background:#c3c3c3;"></div><div class="t" style="left:788.53px;top:497.78px;font-size:14.5px;line-height:17px;color:#000;transform:scaleX(1.0188);">6 490</div><div class="r" style="left:828px;top:495px;width:103px;height:20px;background:#c3c3c3;"></div><div class="t" style="left:876.10px;top:497.78px;font-size:14.5px;line-height:17px;color:#000;transform:scaleX(1.0188);">539 570</div><div class="r" style="left:26px;top:515px;width:906px;height:1px;background:#000;"></div><div class="r" style="left:933px;top:495px;width:85px;height:20px;background:#fff;"></div><div class="r" style="left:1019px;top:495px;width:54px;height:20px;background:#fff;"></div><div class="r" style="left:932px;top:515px;width:141px;height:1px;background:#d9d9d9;"></div><div class="r" style="left:26px;top:516px;width:339px;height:20px;background:#d0b675;"></div><div class="t" style="left:28.80px;top:518.78px;font-size:14.5px;line-height:17px;color:#000;transform:scaleX(1.0188);">Кроссовки для баскетбола, размер 41</div><div class="r" style="left:366px;top:516px;width:117px;height:20px;background:#c3c3c3;"></div><div class="t" style="left:395.88px;top:518.78px;font-size:14.5px;line-height:17px;color:#000;transform:scaleX(1.0188);">мужской</div><div class="r" style="left:484px;top:516px;width:112px;height:20px;background:#c3c3c3;"></div><div class="t" style="left:505.59px;top:518.78px;font-size:14.5px;line-height:17px;color:#000;transform:scaleX(1.0188);">баскетбол</div><div class="r" style="left:597px;top:516px;width:118px;height:20px;background:#c3c3c3;"></div><div class="t" style="left:688.85px;top:518.78px;font-size:14.5px;line-height:17px;color:#000;transform:scaleX(1.0188);">124</div><div class="r" style="left:716px;top:516px;width:111px;height:20px;background:#c3c3c3;"></div><div class="t" style="left:788.53px;top:518.78px;font-size:14.5px;line-height:17px;color:#000;transform:scaleX(1.0188);">6 490</div><div class="r" style="left:828px;top:516px;width:103px;height:20px;background:#c3c3c3;"></div><div class="t" style="left:863.78px;top:518.78px;font-size:14.5px;line-height:17px;color:#000;transform:scaleX(1.0188);">1 295 800</div><div class="r" style="left:26px;top:536px;width:906px;height:1px;background:#000;"></div><div class="r" style="left:933px;top:516px;width:85px;height:20px;background:#fff;"></div><div class="r" style="left:1019px;top:516px;width:54px;height:20px;background:#fff;"></div><div class="r" style="left:932px;top:536px;width:141px;height:1px;background:#d9d9d9;"></div><div class="r" style="left:26px;top:537px;width:339px;height:20px;background:#d0b675;"></div><div class="t" style="left:28.80px;top:539.78px;font-size:14.5px;line-height:17px;color:#000;transform:scaleX(1.0188);">Кроссовки для баскетбола, размер 42</div><div class="r" style="left:366px;top:537px;width:117px;height:20px;background:#c3c3c3;"></div><div class="t" style="left:395.88px;top:539.78px;font-size:14.5px;line-height:17px;color:#000;transform:scaleX(1.0188);">мужской</div><div class="r" style="left:484px;top:537px;width:112px;height:20px;background:#c3c3c3;"></div><div class="t" style="left:505.59px;top:539.78px;font-size:14.5px;line-height:17px;color:#000;transform:scaleX(1.0188);">баскетбол</div><div class="r" style="left:597px;top:537px;width:118px;height:20px;background:#c3c3c3;"></div><div class="t" style="left:688.85px;top:539.78px;font-size:14.5px;line-height:17px;color:#000;transform:scaleX(1.0188);">124</div><div class="r" style="left:716px;top:537px;width:111px;height:20px;background:#c3c3c3;"></div><div class="t" style="left:788.53px;top:539.78px;font-size:14.5px;line-height:17px;color:#000;transform:scaleX(1.0188);">6 490</div><div class="r" style="left:828px;top:537px;width:103px;height:20px;background:#c3c3c3;"></div><div class="t" style="left:863.78px;top:539.78px;font-size:14.5px;line-height:17px;color:#000;transform:scaleX(1.0188);">1 491 470</div><div class="r" style="left:26px;top:557px;width:906px;height:1px;background:#000;"></div><div class="r" style="left:933px;top:537px;width:85px;height:20px;background:#fff;"></div><div class="r" style="left:1019px;top:537px;width:54px;height:20px;background:#fff;"></div><div class="r" style="left:932px;top:557px;width:141px;height:1px;background:#d9d9d9;"></div><div class="r" style="left:26px;top:558px;width:339px;height:20px;background:#d0b675;"></div><div class="t" style="left:28.80px;top:560.78px;font-size:14.5px;line-height:17px;color:#000;transform:scaleX(1.0188);">Кроссовки беговые, размер 43</div><div class="r" style="left:366px;top:558px;width:117px;height:20px;background:#c3c3c3;"></div><div class="t" style="left:395.88px;top:560.78px;font-size:14.5px;line-height:17px;color:#000;transform:scaleX(1.0188);">мужской</div><div class="r" style="left:484px;top:558px;width:112px;height:20px;background:#c3c3c3;"></div><div class="t" style="left:529.55px;top:560.78px;font-size:14.5px;line-height:17px;color:#000;transform:scaleX(1.0188);">бег</div><div class="r" style="left:597px;top:558px;width:118px;height:20px;background:#c3c3c3;"></div><div class="t" style="left:688.85px;top:560.78px;font-size:14.5px;line-height:17px;color:#000;transform:scaleX(1.0188);">124</div><div class="r" style="left:716px;top:558px;width:111px;height:20px;background:#c3c3c3;"></div><div class="t" style="left:788.53px;top:560.78px;font-size:14.5px;line-height:17px;color:#000;transform:scaleX(1.0188);">6 490</div><div class="r" style="left:828px;top:558px;width:103px;height:20px;background:#c3c3c3;"></div><div class="t" style="left:863.78px;top:560.78px;font-size:14.5px;line-height:17px;color:#000;transform:scaleX(1.0188);">1 481 880</div><div class="r" style="left:26px;top:578px;width:906px;height:1px;background:#000;"></div><div class="r" style="left:933px;top:558px;width:85px;height:20px;background:#fff;"></div><div class="r" style="left:1019px;top:558px;width:54px;height:20px;background:#fff;"></div><div class="r" style="left:932px;top:578px;width:141px;height:1px;background:#d9d9d9;"></div><div class="r" style="left:26px;top:579px;width:339px;height:20px;background:#d0b675;"></div><div class="t" style="left:28.80px;top:581.78px;font-size:14.5px;line-height:17px;color:#000;transform:scaleX(1.0188);">Кроссовки для баскетбола, размер 37</div><div class="r" style="left:366px;top:579px;width:117px;height:20px;background:#c3c3c3;"></div><div class="t" style="left:396.69px;top:581.78px;font-size:14.5px;line-height:17px;color:#000;transform:scaleX(1.0188);">женский</div><div class="r" style="left:484px;top:579px;width:112px;height:20px;background:#c3c3c3;"></div><div class="t" style="left:505.59px;top:581.78px;font-size:14.5px;line-height:17px;color:#000;transform:scaleX(1.0188);">баскетбол</div><div class="r" style="left:597px;top:579px;width:118px;height:20px;background:#c3c3c3;"></div><div class="t" style="left:688.85px;top:581.78px;font-size:14.5px;line-height:17px;color:#000;transform:scaleX(1.0188);">124</div><div class="r" style="left:716px;top:579px;width:111px;height:20px;background:#c3c3c3;"></div><div class="t" style="left:788.53px;top:581.78px;font-size:14.5px;line-height:17px;color:#000;transform:scaleX(1.0188);">6 490</div><div class="r" style="left:828px;top:579px;width:103px;height:20px;background:#c3c3c3;"></div><div class="t" style="left:863.78px;top:581.78px;font-size:14.5px;line-height:17px;color:#000;transform:scaleX(1.0188);">1 347 250</div><div class="r" style="left:26px;top:599px;width:906px;height:1px;background:#000;"></div><div class="r" style="left:933px;top:579px;width:85px;height:20px;background:#fff;"></div><div class="r" style="left:1019px;top:579px;width:54px;height:20px;background:#fff;"></div><div class="r" style="left:932px;top:599px;width:141px;height:1px;background:#d9d9d9;"></div><div class="r" style="left:26px;top:600px;width:339px;height:20px;background:#d0b675;"></div><div class="t" style="left:28.80px;top:602.78px;font-size:14.5px;line-height:17px;color:#000;transform:scaleX(1.0188);">Кроссовки для баскетбола, размер 38</div><div class="r" style="left:366px;top:600px;width:117px;height:20px;background:#c3c3c3;"></div><div class="t" style="left:396.69px;top:602.78px;font-size:14.5px;line-height:17px;color:#000;transform:scaleX(1.0188);">женский</div><div class="r" style="left:484px;top:600px;width:112px;height:20px;background:#c3c3c3;"></div><div class="t" style="left:505.59px;top:602.78px;font-size:14.5px;line-height:17px;color:#000;transform:scaleX(1.0188);">баскетбол</div><div class="r" style="left:597px;top:600px;width:118px;height:20px;background:#c3c3c3;"></div><div class="t" style="left:688.85px;top:602.78px;font-size:14.5px;line-height:17px;color:#000;transform:scaleX(1.0188);">245</div><div class="r" style="left:716px;top:600px;width:111px;height:20px;background:#c3c3c3;"></div><div class="t" style="left:792.64px;top:602.78px;font-size:14.5px;line-height:17px;color:#000;transform:scaleX(1.0188);">5990</div><div class="r" style="left:828px;top:600px;width:103px;height:20px;background:#c3c3c3;"></div><div class="t" style="left:863.78px;top:602.78px;font-size:14.5px;line-height:17px;color:#000;transform:scaleX(1.0188);">1 467 550</div><div class="r" style="left:26px;top:620px;width:906px;height:1px;background:#000;"></div><div class="r" style="left:933px;top:600px;width:85px;height:20px;background:#fff;"></div><div class="r" style="left:1019px;top:600px;width:54px;height:20px;background:#fff;"></div><div class="r" style="left:932px;top:620px;width:141px;height:1px;background:#d9d9d9;"></div><div class="r" style="left:26px;top:621px;width:339px;height:20px;background:#d0b675;"></div><div class="t" style="left:28.80px;top:623.78px;font-size:14.5px;line-height:17px;color:#000;transform:scaleX(1.0188);">Кроссовки для баскетбола, размер 44</div><div class="r" style="left:366px;top:621px;width:117px;height:20px;background:#c3c3c3;"></div><div class="t" style="left:395.88px;top:623.78px;font-size:14.5px;line-height:17px;color:#000;transform:scaleX(1.0188);">мужской</div><div class="r" style="left:484px;top:621px;width:112px;height:20px;background:#c3c3c3;"></div><div class="t" style="left:505.59px;top:623.78px;font-size:14.5px;line-height:17px;color:#000;transform:scaleX(1.0188);">баскетбол</div><div class="r" style="left:597px;top:621px;width:118px;height:20px;background:#c3c3c3;"></div><div class="t" style="left:688.85px;top:623.78px;font-size:14.5px;line-height:17px;color:#000;transform:scaleX(1.0188);">198</div><div class="r" style="left:716px;top:621px;width:111px;height:20px;background:#c3c3c3;"></div><div class="t" style="left:792.64px;top:623.78px;font-size:14.5px;line-height:17px;color:#000;transform:scaleX(1.0188);">5890</div><div class="r" style="left:828px;top:621px;width:103px;height:20px;background:#c3c3c3;"></div><div class="t" style="left:863.78px;top:623.78px;font-size:14.5px;line-height:17px;color:#000;transform:scaleX(1.0188);">1 166 220</div><div class="r" style="left:26px;top:641px;width:906px;height:1px;background:#000;"></div><div class="r" style="left:933px;top:621px;width:85px;height:20px;background:#fff;"></div><div class="r" style="left:1019px;top:621px;width:54px;height:20px;background:#fff;"></div><div class="r" style="left:932px;top:641px;width:141px;height:1px;background:#d9d9d9;"></div><div class="r" style="left:26px;top:642px;width:339px;height:20px;background:#d0b675;"></div><div class="t" style="left:28.80px;top:644.78px;font-size:14.5px;line-height:17px;color:#000;transform:scaleX(1.0188);">Кроссовки для баскетбола, размер 36</div><div class="r" style="left:366px;top:642px;width:117px;height:20px;background:#c3c3c3;"></div><div class="t" style="left:396.69px;top:644.78px;font-size:14.5px;line-height:17px;color:#000;transform:scaleX(1.0188);">женский</div><div class="r" style="left:484px;top:642px;width:112px;height:20px;background:#c3c3c3;"></div><div class="t" style="left:505.59px;top:644.78px;font-size:14.5px;line-height:17px;color:#000;transform:scaleX(1.0188);">баскетбол</div><div class="r" style="left:597px;top:642px;width:118px;height:20px;background:#c3c3c3;"></div><div class="t" style="left:688.85px;top:644.78px;font-size:14.5px;line-height:17px;color:#000;transform:scaleX(1.0188);">187</div><div class="r" style="left:716px;top:642px;width:111px;height:20px;background:#c3c3c3;"></div><div class="t" style="left:792.64px;top:644.78px;font-size:14.5px;line-height:17px;color:#000;transform:scaleX(1.0188);">5990</div><div class="r" style="left:828px;top:642px;width:103px;height:20px;background:#c3c3c3;"></div><div class="t" style="left:863.78px;top:644.78px;font-size:14.5px;line-height:17px;color:#000;transform:scaleX(1.0188);">1 120 130</div><div class="r" style="left:26px;top:662px;width:906px;height:1px;background:#000;"></div><div class="r" style="left:933px;top:642px;width:85px;height:20px;background:#fff;"></div><div class="r" style="left:1019px;top:642px;width:54px;height:20px;background:#fff;"></div><div class="r" style="left:932px;top:662px;width:141px;height:1px;background:#d9d9d9;"></div><div class="r" style="left:365px;top:221px;width:1px;height:442px;background:#000;"></div><div class="r" style="left:483px;top:221px;width:1px;height:442px;background:#000;"></div><div class="r" style="left:596px;top:221px;width:1px;height:442px;background:#000;"></div><div class="r" style="left:715px;top:221px;width:1px;height:442px;background:#000;"></div><div class="r" style="left:827px;top:221px;width:1px;height:442px;background:#000;"></div><div class="r" style="left:1018px;top:221px;width:1px;height:442px;background:#d9d9d9;"></div><div class="r" style="left:1073px;top:221px;width:1px;height:443px;background:#a6a6a6;"></div><div class="r" style="left:0px;top:663px;width:1073px;height:1px;background:#c6c6c6;"></div><div class="r" style="left:25px;top:220px;width:908px;height:444px;border:3px solid #0b7040"></div><svg class="s" style="left:25px;top:220px;" width="908" height="444" viewBox="0 0 908 444"><rect x="5" y="2" width="2" height="1" fill="#fff"/><rect x="14" y="2" width="2" height="1" fill="#fff"/><rect x="23" y="2" width="2" height="1" fill="#fff"/><rect x="32" y="2" width="2" height="1" fill="#fff"/><rect x="41" y="2" width="2" height="1" fill="#fff"/><rect x="50" y="2" width="2" height="1" fill="#fff"/><rect x="59" y="2" width="2" height="1" fill="#fff"/><rect x="68" y="2" width="2" height="1" fill="#fff"/><rect x="77" y="2" width="2" height="1" fill="#fff"/><rect x="86" y="2" width="2" height="1" fill="#fff"/><rect x="95" y="2" width="2" height="1" fill="#fff"/><rect x="104" y="2" width="2" height="1" fill="#fff"/><rect x="113" y="2" width="2" height="1" fill="#fff"/><rect x="122" y="2" width="2" height="1" fill="#fff"/><rect x="131" y="2" width="2" height="1" fill="#fff"/><rect x="140" y="2" width="2" height="1" fill="#fff"/><rect x="149" y="2" width="2" height="1" fill="#fff"/><rect x="158" y="2" width="2" height="1" fill="#fff"/><rect x="167" y="2" width="2" height="1" fill="#fff"/><rect x="176" y="2" width="2" height="1" fill="#fff"/><rect x="185" y="2" width="2" height="1" fill="#fff"/><rect x="194" y="2" width="2" height="1" fill="#fff"/><rect x="203" y="2" width="2" height="1" fill="#fff"/><rect x="212" y="2" width="2" height="1" fill="#fff"/><rect x="221" y="2" width="2" height="1" fill="#fff"/><rect x="230" y="2" width="2" height="1" fill="#fff"/><rect x="239" y="2" width="2" height="1" fill="#fff"/><rect x="248" y="2" width="2" height="1" fill="#fff"/><rect x="257" y="2" width="2" height="1" fill="#fff"/><rect x="266" y="2" width="2" height="1" fill="#fff"/><rect x="275" y="2" width="2" height="1" fill="#fff"/><rect x="284" y="2" width="2" height="1" fill="#fff"/><rect x="293" y="2" width="2" height="1" fill="#fff"/><rect x="302" y="2" width="2" height="1" fill="#fff"/><rect x="311" y="2" width="2" height="1" fill="#fff"/><rect x="320" y="2" width="2" height="1" fill="#fff"/><rect x="329" y="2" width="2" height="1" fill="#fff"/><rect x="338" y="2" width="2" height="1" fill="#fff"/><rect x="347" y="2" width="2" height="1" fill="#fff"/><rect x="356" y="2" width="2" height="1" fill="#fff"/><rect x="365" y="2" width="2" height="1" fill="#fff"/><rect x="374" y="2" width="2" height="1" fill="#fff"/><rect x="383" y="2" width="2" height="1" fill="#fff"/><rect x="392" y="2" width="2" height="1" fill="#fff"/><rect x="401" y="2" width="2" height="1" fill="#fff"/><rect x="410" y="2" width="2" height="1" fill="#fff"/><rect x="419" y="2" width="2" height="1" fill="#fff"/><rect x="428" y="2" width="2" height="1" fill="#fff"/><rect x="437" y="2" width="2" height="1" fill="#fff"/><rect x="446" y="2" width="2" height="1" fill="#fff"/><rect x="455" y="2" width="2" height="1" fill="#fff"/><rect x="464" y="2" width="2" height="1" fill="#fff"/><rect x="473" y="2" width="2" height="1" fill="#fff"/><rect x="482" y="2" width="2" height="1" fill="#fff"/><rect x="491" y="2" width="2" height="1" fill="#fff"/><rect x="500" y="2" width="2" height="1" fill="#fff"/><rect x="509" y="2" width="2" height="1" fill="#fff"/><rect x="518" y="2" width="2" height="1" fill="#fff"/><rect x="527" y="2" width="2" height="1" fill="#fff"/><rect x="536" y="2" width="2" height="1" fill="#fff"/><rect x="545" y="2" width="2" height="1" fill="#fff"/><rect x="554" y="2" width="2" height="1" fill="#fff"/><rect x="563" y="2" width="2" height="1" fill="#fff"/><rect x="572" y="2" width="2" height="1" fill="#fff"/><rect x="581" y="2" width="2" height="1" fill="#fff"/><rect x="590" y="2" width="2" height="1" fill="#fff"/><rect x="599" y="2" width="2" height="1" fill="#fff"/><rect x="608" y="2" width="2" height="1" fill="#fff"/><rect x="617" y="2" width="2" height="1" fill="#fff"/><rect x="626" y="2" width="2" height="1" fill="#fff"/><rect x="635" y="2" width="2" height="1" fill="#fff"/><rect x="644" y="2" width="2" height="1" fill="#fff"/><rect x="653" y="2" width="2" height="1" fill="#fff"/><rect x="662" y="2" width="2" height="1" fill="#fff"/><rect x="671" y="2" width="2" height="1" fill="#fff"/><rect x="680" y="2" width="2" height="1" fill="#fff"/><rect x="689" y="2" width="2" height="1" fill="#fff"/><rect x="698" y="2" width="2" height="1" fill="#fff"/><rect x="707" y="2" width="2" height="1" fill="#fff"/><rect x="716" y="2" width="2" height="1" fill="#fff"/><rect x="725" y="2" width="2" height="1" fill="#fff"/><rect x="734" y="2" width="2" height="1" fill="#fff"/><rect x="743" y="2" width="2" height="1" fill="#fff"/><rect x="752" y="2" width="2" height="1" fill="#fff"/><rect x="761" y="2" width="2" height="1" fill="#fff"/><rect x="770" y="2" width="2" height="1" fill="#fff"/><rect x="779" y="2" width="2" height="1" fill="#fff"/><rect x="788" y="2" width="2" height="1" fill="#fff"/><rect x="797" y="2" width="2" height="1" fill="#fff"/><rect x="806" y="2" width="2" height="1" fill="#fff"/><rect x="815" y="2" width="2" height="1" fill="#fff"/><rect x="824" y="2" width="2" height="1" fill="#fff"/><rect x="833" y="2" width="2" height="1" fill="#fff"/><rect x="842" y="2" width="2" height="1" fill="#fff"/><rect x="851" y="2" width="2" height="1" fill="#fff"/><rect x="860" y="2" width="2" height="1" fill="#fff"/><rect x="869" y="2" width="2" height="1" fill="#fff"/><rect x="878" y="2" width="2" height="1" fill="#fff"/><rect x="887" y="2" width="2" height="1" fill="#fff"/><rect x="896" y="2" width="2" height="1" fill="#fff"/><rect x="4" y="441" width="2" height="2" fill="#fff"/><rect x="13" y="441" width="2" height="2" fill="#fff"/><rect x="22" y="441" width="2" height="2" fill="#fff"/><rect x="31" y="441" width="2" height="2" fill="#fff"/><rect x="40" y="441" width="2" height="2" fill="#fff"/><rect x="49" y="441" width="2" height="2" fill="#fff"/><rect x="58" y="441" width="2" height="2" fill="#fff"/><rect x="67" y="441" width="2" height="2" fill="#fff"/><rect x="76" y="441" width="2" height="2" fill="#fff"/><rect x="85" y="441" width="2" height="2" fill="#fff"/><rect x="94" y="441" width="2" height="2" fill="#fff"/><rect x="103" y="441" width="2" height="2" fill="#fff"/><rect x="112" y="441" width="2" height="2" fill="#fff"/><rect x="121" y="441" width="2" height="2" fill="#fff"/><rect x="130" y="441" width="2" height="2" fill="#fff"/><rect x="139" y="441" width="2" height="2" fill="#fff"/><rect x="148" y="441" width="2" height="2" fill="#fff"/><rect x="157" y="441" width="2" height="2" fill="#fff"/><rect x="166" y="441" width="2" height="2" fill="#fff"/><rect x="175" y="441" width="2" height="2" fill="#fff"/><rect x="184" y="441" width="2" height="2" fill="#fff"/><rect x="193" y="441" width="2" height="2" fill="#fff"/><rect x="202" y="441" width="2" height="2" fill="#fff"/><rect x="211" y="441" width="2" height="2" fill="#fff"/><rect x="220" y="441" width="2" height="2" fill="#fff"/><rect x="229" y="441" width="2" height="2" fill="#fff"/><rect x="238" y="441" width="2" height="2" fill="#fff"/><rect x="247" y="441" width="2" height="2" fill="#fff"/><rect x="256" y="441" width="2" height="2" fill="#fff"/><rect x="265" y="441" width="2" height="2" fill="#fff"/><rect x="274" y="441" width="2" height="2" fill="#fff"/><rect x="283" y="441" width="2" height="2" fill="#fff"/><rect x="292" y="441" width="2" height="2" fill="#fff"/><rect x="301" y="441" width="2" height="2" fill="#fff"/><rect x="310" y="441" width="2" height="2" fill="#fff"/><rect x="319" y="441" width="2" height="2" fill="#fff"/><rect x="328" y="441" width="2" height="2" fill="#fff"/><rect x="337" y="441" width="2" height="2" fill="#fff"/><rect x="346" y="441" width="2" height="2" fill="#fff"/><rect x="355" y="441" width="2" height="2" fill="#fff"/><rect x="364" y="441" width="2" height="2" fill="#fff"/><rect x="373" y="441" width="2" height="2" fill="#fff"/><rect x="382" y="441" width="2" height="2" fill="#fff"/><rect x="391" y="441" width="2" height="2" fill="#fff"/><rect x="400" y="441" width="2" height="2" fill="#fff"/><rect x="409" y="441" width="2" height="2" fill="#fff"/><rect x="418" y="441" width="2" height="2" fill="#fff"/><rect x="427" y="441" width="2" height="2" fill="#fff"/><rect x="436" y="441" width="2" height="2" fill="#fff"/><rect x="445" y="441" width="2" height="2" fill="#fff"/><rect x="454" y="441" width="2" height="2" fill="#fff"/><rect x="463" y="441" width="2" height="2" fill="#fff"/><rect x="472" y="441" width="2" height="2" fill="#fff"/><rect x="481" y="441" width="2" height="2" fill="#fff"/><rect x="490" y="441" width="2" height="2" fill="#fff"/><rect x="499" y="441" width="2" height="2" fill="#fff"/><rect x="508" y="441" width="2" height="2" fill="#fff"/><rect x="517" y="441" width="2" height="2" fill="#fff"/><rect x="526" y="441" width="2" height="2" fill="#fff"/><rect x="535" y="441" width="2" height="2" fill="#fff"/><rect x="544" y="441" width="2" height="2" fill="#fff"/><rect x="553" y="441" width="2" height="2" fill="#fff"/><rect x="562" y="441" width="2" height="2" fill="#fff"/><rect x="571" y="441" width="2" height="2" fill="#fff"/><rect x="580" y="441" width="2" height="2" fill="#fff"/><rect x="589" y="441" width="2" height="2" fill="#fff"/><rect x="598" y="441" width="2" height="2" fill="#fff"/><rect x="607" y="441" width="2" height="2" fill="#fff"/><rect x="616" y="441" width="2" height="2" fill="#fff"/><rect x="625" y="441" width="2" height="2" fill="#fff"/><rect x="634" y="441" width="2" height="2" fill="#fff"/><rect x="643" y="441" width="2" height="2" fill="#fff"/><rect x="652" y="441" width="2" height="2" fill="#fff"/><rect x="661" y="441" width="2" height="2" fill="#fff"/><rect x="670" y="441" width="2" height="2" fill="#fff"/><rect x="679" y="441" width="2" height="2" fill="#fff"/><rect x="688" y="441" width="2" height="2" fill="#fff"/><rect x="697" y="441" width="2" height="2" fill="#fff"/><rect x="706" y="441" width="2" height="2" fill="#fff"/><rect x="715" y="441" width="2" height="2" fill="#fff"/><rect x="724" y="441" width="2" height="2" fill="#fff"/><rect x="733" y="441" width="2" height="2" fill="#fff"/><rect x="742" y="441" width="2" height="2" fill="#fff"/><rect x="751" y="441" width="2" height="2" fill="#fff"/><rect x="760" y="441" width="2" height="2" fill="#fff"/><rect x="769" y="441" width="2" height="2" fill="#fff"/><rect x="778" y="441" width="2" height="2" fill="#fff"/><rect x="787" y="441" width="2" height="2" fill="#fff"/><rect x="796" y="441" width="2" height="2" fill="#fff"/><rect x="805" y="441" width="2" height="2" fill="#fff"/><rect x="814" y="441" width="2" height="2" fill="#fff"/><rect x="823" y="441" width="2" height="2" fill="#fff"/><rect x="832" y="441" width="2" height="2" fill="#fff"/><rect x="841" y="441" width="2" height="2" fill="#fff"/><rect x="850" y="441" width="2" height="2" fill="#fff"/><rect x="859" y="441" width="2" height="2" fill="#fff"/><rect x="868" y="441" width="2" height="2" fill="#fff"/><rect x="877" y="441" width="2" height="2" fill="#fff"/><rect x="886" y="441" width="2" height="2" fill="#fff"/><rect x="895" y="441" width="2" height="2" fill="#fff"/><rect x="904" y="441" width="2" height="2" fill="#fff"/><rect x="2" y="4" width="1" height="2" fill="#fff"/><rect x="2" y="13" width="1" height="2" fill="#fff"/><rect x="2" y="22" width="1" height="2" fill="#fff"/><rect x="2" y="31" width="1" height="2" fill="#fff"/><rect x="2" y="40" width="1" height="2" fill="#fff"/><rect x="2" y="49" width="1" height="2" fill="#fff"/><rect x="2" y="58" width="1" height="2" fill="#fff"/><rect x="2" y="67" width="1" height="2" fill="#fff"/><rect x="2" y="76" width="1" height="2" fill="#fff"/><rect x="2" y="85" width="1" height="2" fill="#fff"/><rect x="2" y="94" width="1" height="2" fill="#fff"/><rect x="2" y="103" width="1" height="2" fill="#fff"/><rect x="2" y="112" width="1" height="2" fill="#fff"/><rect x="2" y="121" width="1" height="2" fill="#fff"/><rect x="2" y="130" width="1" height="2" fill="#fff"/><rect x="2" y="139" width="1" height="2" fill="#fff"/><rect x="2" y="148" width="1" height="2" fill="#fff"/><rect x="2" y="157" width="1" height="2" fill="#fff"/><rect x="2" y="166" width="1" height="2" fill="#fff"/><rect x="2" y="175" width="1" height="2" fill="#fff"/><rect x="2" y="184" width="1" height="2" fill="#fff"/><rect x="2" y="193" width="1" height="2" fill="#fff"/><rect x="2" y="202" width="1" height="2" fill="#fff"/><rect x="2" y="211" width="1" height="2" fill="#fff"/><rect x="2" y="220" width="1" height="2" fill="#fff"/><rect x="2" y="229" width="1" height="2" fill="#fff"/><rect x="2" y="238" width="1" height="2" fill="#fff"/><rect x="2" y="247" width="1" height="2" fill="#fff"/><rect x="2" y="256" width="1" height="2" fill="#fff"/><rect x="2" y="265" width="1" height="2" fill="#fff"/><rect x="2" y="274" width="1" height="2" fill="#fff"/><rect x="2" y="283" width="1" height="2" fill="#fff"/><rect x="2" y="292" width="1" height="2" fill="#fff"/><rect x="2" y="301" width="1" height="2" fill="#fff"/><rect x="2" y="310" width="1" height="2" fill="#fff"/><rect x="2" y="319" width="1" height="2" fill="#fff"/><rect x="2" y="328" width="1" height="2" fill="#fff"/><rect x="2" y="337" width="1" height="2" fill="#fff"/><rect x="2" y="346" width="1" height="2" fill="#fff"/><rect x="2" y="355" width="1" height="2" fill="#fff"/><rect x="2" y="364" width="1" height="2" fill="#fff"/><rect x="2" y="373" width="1" height="2" fill="#fff"/><rect x="2" y="382" width="1" height="2" fill="#fff"/><rect x="2" y="391" width="1" height="2" fill="#fff"/><rect x="2" y="400" width="1" height="2" fill="#fff"/><rect x="2" y="409" width="1" height="2" fill="#fff"/><rect x="2" y="418" width="1" height="2" fill="#fff"/><rect x="2" y="427" width="1" height="2" fill="#fff"/><rect x="2" y="436" width="1" height="2" fill="#fff"/><rect x="905" y="5" width="2" height="2" fill="#fff"/><rect x="905" y="14" width="2" height="2" fill="#fff"/><rect x="905" y="23" width="2" height="2" fill="#fff"/><rect x="905" y="32" width="2" height="2" fill="#fff"/><rect x="905" y="41" width="2" height="2" fill="#fff"/><rect x="905" y="50" width="2" height="2" fill="#fff"/><rect x="905" y="59" width="2" height="2" fill="#fff"/><rect x="905" y="68" width="2" height="2" fill="#fff"/><rect x="905" y="77" width="2" height="2" fill="#fff"/><rect x="905" y="86" width="2" height="2" fill="#fff"/><rect x="905" y="95" width="2" height="2" fill="#fff"/><rect x="905" y="104" width="2" height="2" fill="#fff"/><rect x="905" y="113" width="2" height="2" fill="#fff"/><rect x="905" y="122" width="2" height="2" fill="#fff"/><rect x="905" y="131" width="2" height="2" fill="#fff"/><rect x="905" y="140" width="2" height="2" fill="#fff"/><rect x="905" y="149" width="2" height="2" fill="#fff"/><rect x="905" y="158" width="2" height="2" fill="#fff"/><rect x="905" y="167" width="2" height="2" fill="#fff"/><rect x="905" y="176" width="2" height="2" fill="#fff"/><rect x="905" y="185" width="2" height="2" fill="#fff"/><rect x="905" y="194" width="2" height="2" fill="#fff"/><rect x="905" y="203" width="2" height="2" fill="#fff"/><rect x="905" y="212" width="2" height="2" fill="#fff"/><rect x="905" y="221" width="2" height="2" fill="#fff"/><rect x="905" y="230" width="2" height="2" fill="#fff"/><rect x="905" y="239" width="2" height="2" fill="#fff"/><rect x="905" y="248" width="2" height="2" fill="#fff"/><rect x="905" y="257" width="2" height="2" fill="#fff"/><rect x="905" y="266" width="2" height="2" fill="#fff"/><rect x="905" y="275" width="2" height="2" fill="#fff"/><rect x="905" y="284" width="2" height="2" fill="#fff"/><rect x="905" y="293" width="2" height="2" fill="#fff"/><rect x="905" y="302" width="2" height="2" fill="#fff"/><rect x="905" y="311" width="2" height="2" fill="#fff"/><rect x="905" y="320" width="2" height="2" fill="#fff"/><rect x="905" y="329" width="2" height="2" fill="#fff"/><rect x="905" y="338" width="2" height="2" fill="#fff"/><rect x="905" y="347" width="2" height="2" fill="#fff"/><rect x="905" y="356" width="2" height="2" fill="#fff"/><rect x="905" y="365" width="2" height="2" fill="#fff"/><rect x="905" y="374" width="2" height="2" fill="#fff"/><rect x="905" y="383" width="2" height="2" fill="#fff"/><rect x="905" y="392" width="2" height="2" fill="#fff"/><rect x="905" y="401" width="2" height="2" fill="#fff"/><rect x="905" y="410" width="2" height="2" fill="#fff"/><rect x="905" y="419" width="2" height="2" fill="#fff"/><rect x="905" y="428" width="2" height="2" fill="#fff"/><rect x="905" y="437" width="2" height="2" fill="#fff"/></svg><div class="r" style="left:928px;top:658px;width:6px;height:2px;background:#fff;"></div><div class="r" style="left:928px;top:660px;width:1px;height:4px;background:#fff;"></div><div class="r" style="left:929px;top:660px;width:5px;height:4px;background:#0b7040;"></div><div class="r" style="left:1074px;top:201px;width:20px;height:463px;background:#e6e6e6;"></div><div class="r" style="left:1077px;top:218px;width:15px;height:431px;background:#dadada;"></div><div class="r" style="left:1077px;top:203px;width:15px;height:15px;background:#fff;border:1px solid #c6c6c6"></div><svg class="s" style="left:1080px;top:207px;" width="9" height="5" viewBox="0 0 9 5"><path d="M0 5L4.5 0L9 5Z" fill="#8a8a8a"/></svg><div class="r" style="left:1077px;top:348px;width:15px;height:215px;background:#fff;border:1px solid #a6a6a6"></div><div class="r" style="left:1077px;top:649px;width:15px;height:15px;background:#fff;border:1px solid #c6c6c6"></div><svg class="s" style="left:1080px;top:654px;" width="9" height="5" viewBox="0 0 9 5"><path d="M0 0H9L4.5 5Z" fill="#8a8a8a"/></svg>
<div class="r" style="left:0px;top:664px;width:1094px;height:28px;background:#e6e6e6;"></div><svg class="s" style="left:24px;top:674px;" width="5" height="7" viewBox="0 0 5 7"><path d="M5 0V7L0 3.5Z" fill="#c0c0c0"/></svg><svg class="s" style="left:54px;top:674px;" width="5" height="7" viewBox="0 0 5 7"><path d="M0 0V7L5 3.5Z" fill="#c0c0c0"/></svg><div class="r" style="left:98px;top:664px;width:107px;height:25px;background:#fff;border:1px solid #c6c6c6;border-top:none"></div><div class="r" style="left:98px;top:687px;width:107px;height:2px;background:#217346;"></div><div class="t" style="left:110.05px;top:670.00px;font-size:13px;line-height:15px;color:#217346;font-weight:bold;transform:scaleX(0.9853);">microexcel.ru</div><svg class="s" style="left:237px;top:669px;" width="18" height="18" viewBox="0 0 18 18"><circle cx="9" cy="9" r="8" fill="none" stroke="#777" stroke-width="1.3"/><path d="M9 4.5V13.5M4.5 9H13.5" stroke="#777" stroke-width="1.8"/></svg><svg class="s" style="left:656px;top:673px;" width="2" height="11" viewBox="0 0 2 11"><rect x="0" y="0" width="2" height="2" fill="#b0b0b0"/><rect x="0" y="4" width="2" height="2" fill="#b0b0b0"/><rect x="0" y="8" width="2" height="2" fill="#b0b0b0"/></svg><div class="r" style="left:673px;top:672px;width:16px;height:14px;background:#fff;border:1px solid #bdbdbd"></div><svg class="s" style="left:678px;top:675px;" width="5" height="8" viewBox="0 0 5 8"><path d="M5 0V8L0 4Z" fill="#555"/></svg><div class="r" style="left:689px;top:672px;width:321px;height:14px;background:#fff;border:1px solid #bdbdbd"></div><div class="r" style="left:1010px;top:672px;width:46px;height:14px;background:#dcdcdc;"></div><div class="r" style="left:1058px;top:672px;width:15px;height:14px;background:#fff;border:1px solid #bdbdbd"></div><svg class="s" style="left:1064px;top:675px;" width="5" height="8" viewBox="0 0 5 8"><path d="M0 0V8L5 4Z" fill="#555"/></svg><div class="r" style="left:0px;top:692px;width:1094px;height:20px;background:#f3f3f3;"></div><div class="r" style="left:0px;top:692px;width:1094px;height:1px;background:#d9d9d9;"></div><div class="t" style="left:6.30px;top:695.14px;font-size:12px;line-height:14px;color:#444;transform:scaleX(0.9557);">Укажите</div><svg class="s" style="left:70px;top:697px;" width="14" height="13" viewBox="0 0 14 13"><circle cx="3.5" cy="3.5" r="3" fill="#666"/><rect x="7" y="1" width="6" height="3" fill="#666"/><rect x="1.5" y="6.5" width="12" height="6" fill="none" stroke="#666"/><path d="M4 8.5H12M4 10.5H12M6 7V12M9 7V12" stroke="#888"/></svg><div class="t" style="left:457.50px;top:695.14px;font-size:12px;line-height:14px;color:#444;transform:scaleX(0.9086);">Среднее: 726556,2188</div><div class="t" style="left:586.70px;top:695.14px;font-size:12px;line-height:14px;color:#444;transform:scaleX(0.9470);">Количество: 198</div><div class="t" style="left:689.40px;top:695.14px;font-size:12px;line-height:14px;color:#444;transform:scaleX(0.8919);">Сумма: 69749397</div><svg class="s" style="left:807px;top:696px;" width="13" height="13" viewBox="0 0 13 13"><path d="M0.5 0.5H12.5V12.5H0.5ZM0.5 4.5H12.5M0.5 8.5H12.5M4.5 0.5V12.5M8.5 0.5V12.5" fill="none" stroke="#666"/></svg><svg class="s" style="left:845px;top:696px;" width="14" height="13" viewBox="0 0 14 13"><rect x="0.5" y="0.5" width="13" height="12" fill="none" stroke="#666"/><rect x="3.5" y="2.5" width="7" height="8" fill="none" stroke="#666"/><path d="M5 5H9M5 7H9M5 9H9" stroke="#666"/></svg><svg class="s" style="left:883px;top:695px;" width="14" height="14" viewBox="0 0 14 14"><path d="M0.5 13.5V0.5H13.5V13.5ZM0.5 7.5H13.5M4.5 0.5V7.5M9.5 0.5V7.5" fill="none" stroke="#666"/></svg><div class="r" style="left:914px;top:701px;width:7px;height:2px;background:#555;"></div><div class="r" style="left:924px;top:701px;width:100px;height:1px;background:#b5b5b5;"></div><div class="r" style="left:974px;top:698px;width:1px;height:7px;background:#b5b5b5;"></div><div class="r" style="left:1027px;top:701px;width:8px;height:2px;background:#555;"></div><div class="r" style="left:1030px;top:698px;width:2px;height:8px;background:#555;"></div><div class="t" style="left:1046.50px;top:695.14px;font-size:12px;line-height:14px;color:#b0b0b0;transform:scaleX(0.8464);">100 %</div>
<div class="r" style="left:627px;top:448px;width:253px;height:151px;background:#f0f0f0;border:1px solid #16b4cc"></div><div class="r" style="left:628px;top:449px;width:251px;height:30px;background:#fff;"></div><div class="t" style="left:635.80px;top:456.67px;font-size:12.5px;line-height:14px;color:#000;transform:scaleX(0.9554);">Форматирование таблицы</div><div class="t" style="left:808.50px;top:454.28px;font-size:14.5px;line-height:17px;color:#000;transform:scaleX(0.8060);">?</div><svg class="s" style="left:851px;top:458px;" width="11" height="11" viewBox="0 0 11 11"><path d="M0.5 0.5L10.5 10.5M10.5 0.5L0.5 10.5" stroke="#000" stroke-width="1.1"/></svg><div class="t" style="left:633.70px;top:485.91px;font-size:11.8px;line-height:14px;color:#000;transform:scaleX(0.9839);">Укажите расположение данных таблицы:</div><div class="r" style="left:634px;top:498px;width:6px;height:1px;background:#000;"></div><div class="r" style="left:658px;top:502px;width:192px;height:20px;background:#fff;border:1px solid #adadad"></div><div class="r" style="left:662px;top:506px;width:66px;height:13px;background:#c8c8c8;"></div><div class="t" style="left:662.00px;top:504.97px;font-size:12.5px;line-height:14px;color:#000;transform:scaleX(0.8752);">=$A$1:$F$33</div><div class="r" style="left:728px;top:505px;width:1px;height:15px;background:#000;"></div><div class="r" style="left:828px;top:503px;width:21px;height:18px;background:#e6e6e6;"></div><div class="r" style="left:830px;top:505px;width:17px;height:14px;background:#fff;"></div><svg class="s" style="left:832px;top:506px;" width="12" height="12" viewBox="0 0 12 12"><path d="M6 1L10.5 5.5H7.5V9H4.5V5.5H1.5Z" fill="#000"/><rect x="1" y="10" width="10" height="1.5" fill="#000"/></svg><div class="r" style="left:658px;top:533px;width:13px;height:13px;background:#fff;border:1px solid #333"></div><svg class="s" style="left:659px;top:534px;" width="11" height="11" viewBox="0 0 11 11"><path d="M1.5 5.5L4.2 8.3L9.5 2.5" fill="none" stroke="#333" stroke-width="1.3"/></svg><div class="t" style="left:675.00px;top:532.61px;font-size:11.8px;line-height:14px;color:#000;transform:scaleX(0.9704);">Таблица с заголовками</div><div class="r" style="left:675px;top:545px;width:5px;height:1px;background:#000;"></div><div class="r" style="left:714px;top:568px;width:74px;height:22px;background:#e1e1e1;border:2px solid #0078d7"></div><div class="t" style="left:743.85px;top:572.47px;font-size:12.5px;line-height:14px;color:#000;transform:scaleX(0.8410);">ОК</div><div class="r" style="left:798px;top:568px;width:74px;height:22px;background:#e1e1e1;border:1px solid #adadad"></div><div class="t" style="left:814.75px;top:572.47px;font-size:12.5px;line-height:14px;color:#000;transform:scaleX(0.9030);">Отмена</div><svg class="s" style="left:622px;top:444px;" width="264" height="160" viewBox="0 0 264 160"><rect x="1.75" y="1.75" width="260.5" height="156.5" rx="8" fill="none" stroke="#f70707" stroke-width="3.5"/></svg><svg class="s" style="left:626px;top:544px;" width="42" height="38" viewBox="0 0 42 38"><path d="M4 33L31 10" stroke="#f20a0a" stroke-width="3" stroke-linecap="round"/><path d="M37 5L22 10L30 18Z" fill="#f20a0a"/></svg>
</body></html>
